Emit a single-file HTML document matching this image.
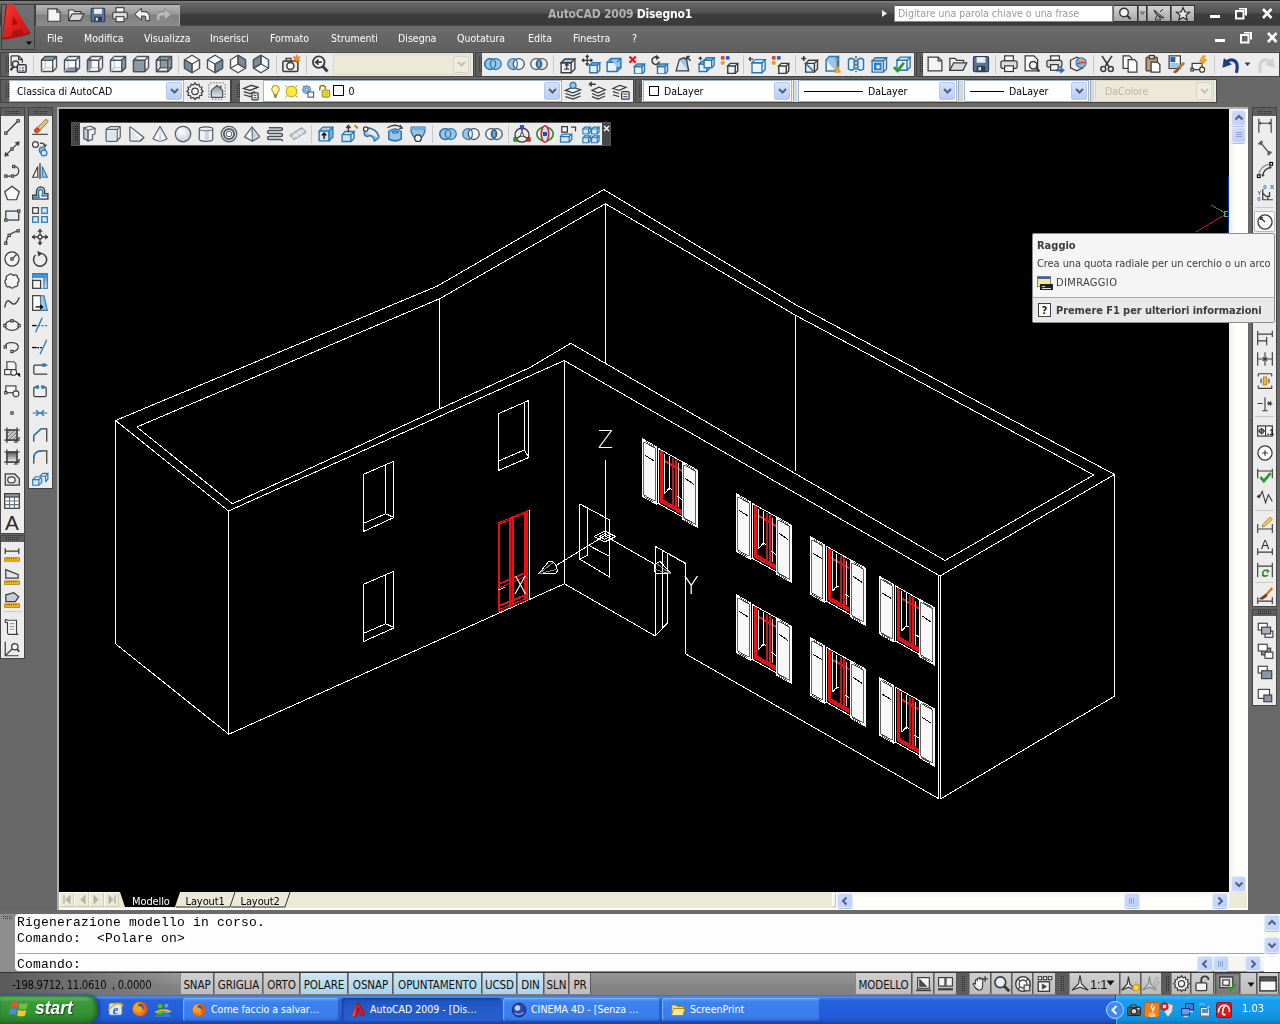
<!DOCTYPE html>
<html><head><meta charset="utf-8"><title>AutoCAD 2009 Disegno1</title>
<style>

html,body{margin:0;padding:0;}
body{width:1280px;height:1024px;overflow:hidden;background:#686868;position:relative;font-family:"DejaVu Sans Condensed","Liberation Sans",sans-serif;font-size:10.5px;color:#000;}
.a{position:absolute;box-sizing:border-box;}
.t{position:absolute;white-space:nowrap;line-height:1;}
.t,.st,.task,.combo{will-change:opacity;}
.tb{position:absolute;box-sizing:border-box;background:#ececec;border:1px solid #444;}
.grip{position:absolute;background:#4a4a4a;}
.sep{position:absolute;background:#c9c9c9;}
.combo{position:absolute;box-sizing:border-box;background:#fff;border:1px solid #9ab8d4;}
.dd{position:absolute;box-sizing:border-box;background:linear-gradient(#d6e2fb,#b9cdf6);border:1px solid #b4c8f0;border-radius:2px;}
.sbtn{position:absolute;box-sizing:border-box;background:linear-gradient(135deg,#cfdbfb,#bccef7);border:1px solid #e4ebfc;border-radius:3px;box-shadow:0 1px 0 #b0c0e4;}
.st{position:absolute;box-sizing:border-box;top:973px;height:21px;border-left:1px solid #8a8a8a;border-right:1px solid #5a5a5a;font-size:11.5px;line-height:24px;text-align:center;color:#111;background:linear-gradient(#d0d0d0,#bcbcbc);white-space:nowrap;overflow:hidden;letter-spacing:-0.1px}
.sx{display:inline-block;transform:scaleY(1.12);transform-origin:50% 55%}
.st.on{background:linear-gradient(#cfe6f3,#a9d2ea);}
.task{position:absolute;box-sizing:border-box;top:998px;height:23px;border-radius:3px;background:linear-gradient(#5c9bf4,#3c81f0 20%,#3a7eec 80%,#3572dc);box-shadow:inset 1px 1px 1px #7db2f8, inset -1px -1px 1px #2a5fc5;color:#fff;font-size:10.5px;line-height:23px;white-space:nowrap;overflow:hidden;}
.task.act{background:linear-gradient(#1c4fb4,#2259c6 30%,#2660d0);box-shadow:inset 1px 1px 2px #123a94;}

</style></head>
<body>
<div class="a" style="left:0px;top:0px;width:1280px;height:26px;background:linear-gradient(#222 0,#222 1px,#828282 1px,#646464 4px,#505050 13px,#3d3d3d 14px,#3a3a3a 24px,#484848 26px);"></div>
<div class="a" style="left:35px;top:4px;width:145px;height:22px;background:linear-gradient(#b6b6b6,#9a9a9a 40%,#808080 50%,#8c8c8c);border-top:1px solid #3c3c3c;border-left:1px solid #3c3c3c;border-right:1px solid #aaa;"></div>
<svg class="a" style="left:45.0px;top:6.0px" width="18" height="18" viewBox="0 0 16 16"><path d="M2.5,2.5 H10.5 L13.5,5.5 V13.5 H2.5 Z" stroke="#3c3c3c" stroke-width="1" fill="#f4f4f6" /><path d="M10.5,2.5 V5.5 H13.5" stroke="#3c3c3c" stroke-width="1" fill="none" /></svg>
<svg class="a" style="left:67.0px;top:6.0px" width="18" height="18" viewBox="0 0 16 16"><path d="M1.5,13 V3.5 H5.5 L7,5 H12.5 V7" stroke="#3c3c3c" stroke-width="1" fill="#f0f0f0" /><path d="M1.5,13 L4.5,7 H15 L12,13 Z" stroke="#3c3c3c" stroke-width="1" fill="#d6dade" /></svg>
<svg class="a" style="left:89.0px;top:6.0px" width="18" height="18" viewBox="0 0 16 16"><rect x="2" y="2" width="12" height="12" rx="1" stroke="#2c3e58" stroke-width="1" fill="#5c7494"/><rect x="4.5" y="2.5" width="7" height="4.5" rx="0" stroke="none" stroke-width="0" fill="#e8ecf0"/><rect x="4.5" y="9.5" width="7" height="4" rx="0" stroke="none" stroke-width="0" fill="#2c3e58"/><rect x="6" y="10.5" width="2" height="2.5" rx="0" stroke="none" stroke-width="0" fill="#dfe3e8"/></svg>
<svg class="a" style="left:111.0px;top:6.0px" width="18" height="18" viewBox="0 0 16 16"><rect x="4.5" y="1.5" width="7" height="4" rx="0" stroke="#3c3c3c" stroke-width="1" fill="#fff"/><rect x="1.5" y="5.5" width="13" height="6" rx="1.5" stroke="#3c3c3c" stroke-width="1" fill="#d8dce0"/><rect x="4.5" y="9.5" width="7" height="4.5" rx="0" stroke="#3c3c3c" stroke-width="1" fill="#fff"/></svg>
<svg class="a" style="left:133.0px;top:6.0px" width="18" height="18" viewBox="0 0 16 16"><path d="M1.5,7.5 L7.5,2 V5 H10 Q14.5,5 14.5,9.5 V13 H11.5 V10 Q11.5,9 10,9 H7.5 V12.5 Z" stroke="#4a4a4a" stroke-width="0.9" fill="#f6f6f6" stroke-linejoin="round"/></svg>
<svg class="a" style="left:155.0px;top:6.0px" width="18" height="18" viewBox="0 0 16 16"><path d="M14.5,7.5 L8.5,2 V5 H6 Q1.5,5 1.5,9.5 V13 H4.5 V10 Q4.5,9 6,9 H8.5 V12.5 Z" stroke="#8a8a8a" stroke-width="0.9" fill="#b8b8b8" stroke-linejoin="round"/></svg>
<div class="t" style="left:548px;top:7.5px;font-size:12px;font-weight:bold;letter-spacing:-0.2px;"><span style="color:#b2b2b2">AutoCAD 2009</span> <span style="color:#fff">Disegno1</span></div>
<svg class="a" style="left:881px;top:9px" width="8" height="9"><path d="M1,1 L6,4.5 L1,8 Z" fill="#eee"/></svg>
<div class="a" style="left:894px;top:5px;width:219px;height:17px;background:#fff;border:1px solid #8a8a8a;border-top-color:#555;"></div>
<div class="t" style="left:898px;top:8px;color:#9a9a9a;font-size:10.5px;">Digitare una parola chiave o una frase</div>
<div class="a" style="left:1113px;top:5px;width:25px;height:17px;background:linear-gradient(#d4d4d4,#a6a6a6);border:1px solid #333;border-left-color:#666;"></div>
<div class="a" style="left:1138px;top:5px;width:9px;height:17px;background:linear-gradient(#d4d4d4,#a6a6a6);border:1px solid #333;border-left-color:#666;"></div>
<div class="a" style="left:1147px;top:5px;width:24px;height:17px;background:linear-gradient(#d4d4d4,#a6a6a6);border:1px solid #333;border-left-color:#666;"></div>
<div class="a" style="left:1171px;top:5px;width:24px;height:17px;background:linear-gradient(#d4d4d4,#a6a6a6);border:1px solid #333;border-left-color:#666;"></div>
<svg class="a" style="left:1117.0px;top:5.5px" width="16" height="16" viewBox="0 0 16 16"><circle cx="7" cy="6.5" r="4.3" stroke="#333" stroke-width="1.4" fill="#f4f4f4"/><path d="M10,9.5 L13.5,13" stroke="#333" stroke-width="2" fill="none" /></svg>
<svg class="a" style="left:1150.5px;top:5.5px" width="16" height="16" viewBox="0 0 16 16"><path d="M3,4 Q6,11 13,12" stroke="#333" stroke-width="1.2" fill="none" /><path d="M3,4 L13,12 M6,9.5 L4,14 H10 L8,10.8 M9,6 L12,3" stroke="#333" stroke-width="1" fill="none" /></svg>
<svg class="a" style="left:1174.5px;top:5.5px" width="16" height="16" viewBox="0 0 16 16"><path d="M8,1.5 L9.9,6 L14.6,6.3 L11,9.3 L12.2,14 L8,11.4 L3.8,14 L5,9.3 L1.4,6.3 L6.1,6 Z" stroke="#222" stroke-width="1.1" fill="#e8e8e8" /></svg>
<svg class="a" style="left:1139px;top:11px" width="7" height="5"><path d="M0.5,0.5 L6.5,0.5 L3.5,4.5 Z" fill="#777"/></svg>
<svg class="a" style="left:1210px;top:8px" width="66" height="14" viewBox="0 0 66 14">
<rect x="0" y="7" width="10" height="3" fill="#fff"/>
<path d="M29,0.5 h7 v7 M26,3 h7.5 v7.5 h-7.5 Z" fill="none" stroke="#fff" stroke-width="2"/>
<path d="M53,1 L61.5,10 M61.5,1 L53,10" stroke="#fff" stroke-width="2.6" fill="none"/>
</svg>
<div class="a" style="left:0px;top:26px;width:1280px;height:25px;background:linear-gradient(#6c6c6c,#5f5f5f);"></div>
<div class="t" style="left:47px;top:33px;color:#fff;font-size:10.5px;">File</div>
<div class="t" style="left:84px;top:33px;color:#fff;font-size:10.5px;">Modifica</div>
<div class="t" style="left:144px;top:33px;color:#fff;font-size:10.5px;">Visualizza</div>
<div class="t" style="left:210px;top:33px;color:#fff;font-size:10.5px;">Inserisci</div>
<div class="t" style="left:270px;top:33px;color:#fff;font-size:10.5px;">Formato</div>
<div class="t" style="left:331px;top:33px;color:#fff;font-size:10.5px;">Strumenti</div>
<div class="t" style="left:398px;top:33px;color:#fff;font-size:10.5px;">Disegna</div>
<div class="t" style="left:457px;top:33px;color:#fff;font-size:10.5px;">Quotatura</div>
<div class="t" style="left:528px;top:33px;color:#fff;font-size:10.5px;">Edita</div>
<div class="t" style="left:573px;top:33px;color:#fff;font-size:10.5px;">Finestra</div>
<div class="t" style="left:632px;top:33px;color:#fff;font-size:10.5px;">?</div>
<svg class="a" style="left:1215px;top:32px" width="66" height="14" viewBox="0 0 66 14">
<rect x="0" y="7" width="10" height="3" fill="#fff"/>
<path d="M29,0.5 h7 v7 M26,3 h7.5 v7.5 h-7.5 Z" fill="none" stroke="#fff" stroke-width="2"/>
<path d="M53,1 L61.5,10 M61.5,1 L53,10" stroke="#fff" stroke-width="2.6" fill="none"/>
</svg>
<div class="a" style="left:1px;top:4px;width:34px;height:46px;background:linear-gradient(#707070,#666);border:1px solid #3e3e3e;border-right-color:#444;"></div>
<svg class="a" style="left:0;top:0" width="36" height="52" viewBox="0 0 36 52">
<defs><linearGradient id="ag" x1="0" y1="0" x2="1" y2="1"><stop offset="0" stop-color="#f23c3c"/><stop offset="0.55" stop-color="#e01c1c"/><stop offset="1" stop-color="#c01212"/></linearGradient></defs>
<path d="M12.5,30.5 L21.5,28.5 L25.5,35.5 L11.5,38.5 Z" fill="#b41212"/>
<path d="M7,4.3 L13.2,4.3 L30.5,33 L25.5,35.5 L21.5,28.5 L12.5,30.5 L11.5,38.2 L2.5,39.5 Z" fill="url(#ag)"/>
<path d="M13.3,15.5 L17.8,24.2 L12,25.3 Z" fill="#a81010"/>
<path d="M7,4.3 L5.6,6 L2.2,37.5 L2.5,39.5 Z" fill="#9c0c0c"/>
<path d="M2.5,39.5 L11.5,38.2 L11.8,36.5 L3,37.8 Z" fill="#a40e0e"/>
<path d="M25.5,35.5 L30.5,33 L29.8,31.8 L24.8,34.2 Z" fill="#a40e0e"/>
<path d="M26,41.5 L32,41.5 L29,45 Z" fill="#000"/>
</svg>
<div class="tb" style="left:0px;top:52px;width:474px;height:25px;"></div>
<div class="a" style="left:1px;top:53px;width:8px;height:23px;background:#5e5e5e;"></div><div class="a" style="left:5px;top:57px;width:4px;height:15px;background:conic-gradient(#2a2a2a 25%,transparent 0) 0 0/2px 2px;"></div>
<svg class="a" style="left:8.0px;top:54.0px" width="20" height="20" viewBox="0 0 16 16"><path d="M2.5,1.5 H8.5 L11.5,4.5 V7" stroke="#3c3c3c" stroke-width="1" fill="none" /><path d="M2.5,1.5 V10" stroke="#3c3c3c" stroke-width="1" fill="none" /><path d="M8.5,1.5 V4.5 H11.5" stroke="#3c3c3c" stroke-width="1" fill="none" /><circle cx="6" cy="8" r="2.5" stroke="#3c3c3c" stroke-width="1.2" fill="none"/><path d="M4.5,10 L2,13" stroke="#3c3c3c" stroke-width="1.8" fill="none" /><rect x="7.5" y="8.5" width="7" height="6" rx="1" stroke="#3c3c3c" stroke-width="1.2" fill="#eef2f6"/><path d="M9,11 H10 M11,11 H13 M9,13 H10 M11,13 H13" stroke="#4a6a9a" stroke-width="1" fill="none" /></svg>
<svg class="a" style="left:39.0px;top:54.0px" width="20" height="20" viewBox="0 0 16 16"><path d="M2,5 L5,2 H14 V11 L11,14 H2 Z" stroke="#4a525c" stroke-width="1.15" fill="#fdfdfd" stroke-linejoin="round"/><path d="M5,2 V11 H14 M5,11 L2,14" stroke="#b8c0ca" stroke-width="0.9" fill="none" /><path d="M2,5 H11 V14 M11,5 L14,2" stroke="#4a525c" stroke-width="1.15" fill="none" stroke-linejoin="round"/><path d="M2,5 L5,2 H14 L11,5 Z" stroke="#4a525c" stroke-width="1" fill="#8e99a6" stroke-linejoin="round"/></svg>
<svg class="a" style="left:62.0px;top:54.0px" width="20" height="20" viewBox="0 0 16 16"><path d="M2,5 L5,2 H14 V11 L11,14 H2 Z" stroke="#4a525c" stroke-width="1.15" fill="#fdfdfd" stroke-linejoin="round"/><path d="M2,14 L5,11 H14 L11,14 Z" stroke="#4a525c" stroke-width="1" fill="#8e99a6" stroke-linejoin="round"/><path d="M5,2 V11 H14 M5,11 L2,14" stroke="#b8c0ca" stroke-width="0.9" fill="none" /><path d="M2,5 H11 V14 M11,5 L14,2" stroke="#4a525c" stroke-width="1.15" fill="none" stroke-linejoin="round"/></svg>
<svg class="a" style="left:85.0px;top:54.0px" width="20" height="20" viewBox="0 0 16 16"><path d="M2,5 L5,2 H14 V11 L11,14 H2 Z" stroke="#4a525c" stroke-width="1.15" fill="#fdfdfd" stroke-linejoin="round"/><path d="M2,5 L5,2 V11 L2,14 Z" stroke="#4a525c" stroke-width="1" fill="#8e99a6" stroke-linejoin="round"/><path d="M5,2 V11 H14 M5,11 L2,14" stroke="#b8c0ca" stroke-width="0.9" fill="none" /><path d="M2,5 H11 V14 M11,5 L14,2" stroke="#4a525c" stroke-width="1.15" fill="none" stroke-linejoin="round"/></svg>
<svg class="a" style="left:108.0px;top:54.0px" width="20" height="20" viewBox="0 0 16 16"><path d="M2,5 L5,2 H14 V11 L11,14 H2 Z" stroke="#4a525c" stroke-width="1.15" fill="#fdfdfd" stroke-linejoin="round"/><path d="M5,2 V11 H14 M5,11 L2,14" stroke="#b8c0ca" stroke-width="0.9" fill="none" /><path d="M2,5 H11 V14 M11,5 L14,2" stroke="#4a525c" stroke-width="1.15" fill="none" stroke-linejoin="round"/><path d="M11,5 L14,2 V11 L11,14 Z" stroke="#4a525c" stroke-width="1" fill="#8e99a6" stroke-linejoin="round"/></svg>
<svg class="a" style="left:131.0px;top:54.0px" width="20" height="20" viewBox="0 0 16 16"><path d="M2,5 L5,2 H14 V11 L11,14 H2 Z" stroke="#4a525c" stroke-width="1.15" fill="#fdfdfd" stroke-linejoin="round"/><path d="M5,2 V11 H14 M5,11 L2,14" stroke="#b8c0ca" stroke-width="0.9" fill="none" /><path d="M2,5 H11 V14 M11,5 L14,2" stroke="#4a525c" stroke-width="1.15" fill="none" stroke-linejoin="round"/><path d="M2,5 H11 V14 H2 Z" stroke="#4a525c" stroke-width="1" fill="#8e99a6" stroke-linejoin="round"/></svg>
<svg class="a" style="left:154.0px;top:54.0px" width="20" height="20" viewBox="0 0 16 16"><path d="M2,5 L5,2 H14 V11 L11,14 H2 Z" stroke="#4a525c" stroke-width="1.15" fill="#fdfdfd" stroke-linejoin="round"/><path d="M5,2 H14 V11 H5 Z" stroke="#4a525c" stroke-width="1" fill="#8e99a6" stroke-linejoin="round"/><path d="M2,5 H11 V14 H2 Z M11,5 L14,2 M2,14 L5,11 M2,5 L5,2 M11,14 L14,11" stroke="#4a525c" stroke-width="1.1" fill="none" stroke-linejoin="round"/></svg>
<svg class="a" style="left:182.0px;top:54.0px" width="20" height="20" viewBox="0 0 16 16"><path d="M8,1 L14,4.6 V11.4 L8,15 L2,11.4 V4.6 Z" stroke="#4a525c" stroke-width="1.15" fill="#fdfdfd" stroke-linejoin="round"/><path d="M2,4.6 L8,8 V15 L2,11.4 Z" stroke="#4a525c" stroke-width="1" fill="#7e8996" stroke-linejoin="round"/><path d="M8,8 L2,4.6 M8,8 L14,4.6 M8,8 V15" stroke="#4a525c" stroke-width="1" fill="none" stroke-linejoin="round"/></svg>
<svg class="a" style="left:205.0px;top:54.0px" width="20" height="20" viewBox="0 0 16 16"><path d="M8,1 L14,4.6 V11.4 L8,15 L2,11.4 V4.6 Z" stroke="#4a525c" stroke-width="1.15" fill="#fdfdfd" stroke-linejoin="round"/><path d="M14,4.6 L8,8 V15 L14,11.4 Z" stroke="#4a525c" stroke-width="1" fill="#7e8996" stroke-linejoin="round"/><path d="M8,8 L2,4.6 M8,8 L14,4.6 M8,8 V15" stroke="#4a525c" stroke-width="1" fill="none" stroke-linejoin="round"/></svg>
<svg class="a" style="left:228.0px;top:54.0px" width="20" height="20" viewBox="0 0 16 16"><path d="M8,1 L14,4.6 V11.4 L8,15 L2,11.4 V4.6 Z" stroke="#4a525c" stroke-width="1.15" fill="#fdfdfd" stroke-linejoin="round"/><path d="M14,4.6 L8,1 V8 L14,11.4 Z" stroke="#4a525c" stroke-width="1" fill="#7e8996" stroke-linejoin="round"/><path d="M8,8 L2,11.4 M8,8 L14,11.4 M8,8 V1" stroke="#4a525c" stroke-width="1" fill="none" stroke-linejoin="round"/></svg>
<svg class="a" style="left:251.0px;top:54.0px" width="20" height="20" viewBox="0 0 16 16"><path d="M8,1 L14,4.6 V11.4 L8,15 L2,11.4 V4.6 Z" stroke="#4a525c" stroke-width="1.15" fill="#fdfdfd" stroke-linejoin="round"/><path d="M2,4.6 L8,1 V8 L2,11.4 Z" stroke="#4a525c" stroke-width="1" fill="#7e8996" stroke-linejoin="round"/><path d="M8,8 L2,11.4 M8,8 L14,11.4 M8,8 V1" stroke="#4a525c" stroke-width="1" fill="none" stroke-linejoin="round"/></svg>
<svg class="a" style="left:281.0px;top:54.0px" width="20" height="20" viewBox="0 0 16 16"><rect x="1.5" y="5.5" width="12" height="8.5" rx="1" stroke="#3c3c3c" stroke-width="1.2" fill="#e8eaee"/><rect x="4" y="3.5" width="4" height="2" rx="0" stroke="#3c3c3c" stroke-width="1" fill="#ddd"/><circle cx="7.5" cy="9.5" r="2.8" stroke="#3c3c3c" stroke-width="1.2" fill="#fff"/><path d="M12.5,0.5 L13.2,2.6 L15.4,2.2 L13.9,3.8 L15.4,5.4 L13.2,5 L12.5,7 L11.8,5 L9.6,5.4 L11.1,3.8 L9.6,2.2 L11.8,2.6 Z" stroke="#e06010" stroke-width="0.5" fill="#f89020" /></svg>
<svg class="a" style="left:310.0px;top:54.0px" width="20" height="20" viewBox="0 0 16 16"><circle cx="7" cy="6.5" r="4.6" stroke="#3c3c3c" stroke-width="1.5" fill="#f4f8fc"/><path d="M10.3,10 L14,14" stroke="#3c3c3c" stroke-width="2.4" fill="none" /><path d="M9.5,6.5 H5 M6.8,4.5 L4.6,6.5 L6.8,8.5" stroke="#3c3c3c" stroke-width="1.4" fill="none" /></svg>
<div class="sep" style="left:33px;top:55px;width:1px;height:19px;"></div>
<div class="sep" style="left:178px;top:55px;width:1px;height:19px;"></div>
<div class="sep" style="left:276px;top:55px;width:1px;height:19px;"></div>
<div class="sep" style="left:306px;top:55px;width:1px;height:19px;"></div>
<div class="combo" style="left:333px;top:54px;width:138px;height:21px;background:#ece9d8;border-color:#d9d6c8"><div class="a" style="right:1px;top:1px;width:16px;height:17px;border:1px solid #d8d5c6;border-radius:2px;background:#efecdf"></div><svg class="a" style="right:4px;top:6.0px" width="9" height="7"><path d="M1,1 L4.5,4.5 L8,1" fill="none" stroke="#c4c1b2" stroke-width="2"/></svg></div>
<div class="tb" style="left:475px;top:52px;width:440px;height:25px;"></div>
<div class="a" style="left:476px;top:53px;width:6px;height:23px;background:#5e5e5e;"></div><div class="a" style="left:478px;top:57px;width:4px;height:15px;background:conic-gradient(#2a2a2a 25%,transparent 0) 0 0/2px 2px;"></div>
<svg class="a" style="left:483.0px;top:54.0px" width="20" height="20" viewBox="0 0 16 16"><circle cx="5.8" cy="8" r="4.4" stroke="#2a78b4" stroke-width="1" fill="#9cc4e4"/><circle cx="10.2" cy="8" r="4.4" stroke="#2a78b4" stroke-width="1" fill="#9cc4e4"/><circle cx="5.8" cy="8" r="4.4" stroke="#2a78b4" stroke-width="1" fill="none"/></svg>
<svg class="a" style="left:506.0px;top:54.0px" width="20" height="20" viewBox="0 0 16 16"><circle cx="5.8" cy="8" r="4.4" stroke="#2a78b4" stroke-width="1" fill="#9cc4e4"/><circle cx="10.2" cy="8" r="4.4" stroke="#4a525c" stroke-width="1" fill="#f4f6f8"/><path d="M8,4.2 Q10.2,8 8,11.8" stroke="#2a78b4" stroke-width="1" fill="none" /></svg>
<svg class="a" style="left:529.0px;top:54.0px" width="20" height="20" viewBox="0 0 16 16"><circle cx="5.8" cy="8" r="4.4" stroke="#4a525c" stroke-width="1" fill="#f6f7f9"/><circle cx="10.2" cy="8" r="4.4" stroke="#4a525c" stroke-width="1" fill="none"/><path d="M8,4.2 Q10.3,8 8,11.8 Q5.7,8 8,4.2 Z" stroke="#2a78b4" stroke-width="1" fill="#9cc4e4" /></svg>
<svg class="a" style="left:558.0px;top:54.0px" width="20" height="20" viewBox="0 0 16 16"><path d="M2.5,7 H10.5 V15 H2.5 Z" stroke="#3c3c3c" stroke-width="1.1" fill="#eaf2fa" /><path d="M2.5,7 L5.5,4 H13.5 L10.5,7 Z" stroke="#3c3c3c" stroke-width="1.1" fill="#9cc4e4" /><path d="M13.5,4 V12 L10.5,15" stroke="#3c3c3c" stroke-width="1.1" fill="none" /><path d="M7,11.5 V7.8 M5.5,9.3 L7,7.6 L8.5,9.3 M5,12 H9" stroke="#3c3c3c" stroke-width="1" fill="none" /></svg>
<svg class="a" style="left:581.0px;top:54.0px" width="20" height="20" viewBox="0 0 16 16"><path d="M7,9 H13 V15 H7 Z" stroke="#2a78b4" stroke-width="1.1" fill="#eaf2fa" /><path d="M7,9 L9,7 H15 L13,9 Z" stroke="#2a78b4" stroke-width="1.1" fill="#9cc4e4" /><path d="M15,7 V13 L13,15" stroke="#2a78b4" stroke-width="1.1" fill="none" /><path d="M5,1 V9 M1,5 H9 M3.8,2.5 L5,1 L6.2,2.5 M3.8,7.5 L5,9 L6.2,7.5 M2.5,3.8 L1,5 L2.5,6.2 M7.5,3.8 L9,5 L7.5,6.2" stroke="#3c3c3c" stroke-width="1" fill="none" /></svg>
<svg class="a" style="left:604.0px;top:54.0px" width="20" height="20" viewBox="0 0 16 16"><path d="M2.5,6.5 H10.5 V14 H2.5 Z" stroke="#2a78b4" stroke-width="1.2" fill="#eaf2fa" /><path d="M5.5,3.5 H13.5 V11 H10.5 M5.5,3.5 V6.5" stroke="#2a78b4" stroke-width="1.2" fill="#9cc4e4" /><path d="M2.5,6.5 L5.5,3.5 M10.5,6.5 L13.5,3.5 M10.5,14 L13.5,11" stroke="#2a78b4" stroke-width="1" fill="none" /></svg>
<svg class="a" style="left:627.0px;top:54.0px" width="20" height="20" viewBox="0 0 16 16"><path d="M6,10 H12 V16 H6 Z" stroke="#2a78b4" stroke-width="1.1" fill="#eaf2fa" /><path d="M6,10 L8,8 H14 L12,10 Z" stroke="#2a78b4" stroke-width="1.1" fill="#9cc4e4" /><path d="M14,8 V14 L12,16" stroke="#2a78b4" stroke-width="1.1" fill="none" /><path d="M2,2 L7,7 M7,2 L2,7" stroke="#d82020" stroke-width="1.8" fill="none" /></svg>
<svg class="a" style="left:650.0px;top:54.0px" width="20" height="20" viewBox="0 0 16 16"><path d="M6,10 H12 V16 H6 Z" stroke="#2a78b4" stroke-width="1.1" fill="#eaf2fa" /><path d="M6,10 L8,8 H14 L12,10 Z" stroke="#2a78b4" stroke-width="1.1" fill="#9cc4e4" /><path d="M14,8 V14 L12,16" stroke="#2a78b4" stroke-width="1.1" fill="none" /><path d="M6.5,3 A3,3 0 1 0 7.5,6" stroke="#3c3c3c" stroke-width="1.2" fill="none" /><path d="M5,1 L7.5,3 L5,4.5 Z" stroke="#3c3c3c" stroke-width="0.5" fill="#3c3c3c" /></svg>
<svg class="a" style="left:673.0px;top:54.0px" width="20" height="20" viewBox="0 0 16 16"><path d="M2.5,13.5 L5,4.5 L9,3 L12.5,13.5 Z" stroke="#3c3c3c" stroke-width="1" fill="#dfe6ee" /><path d="M5,4.5 L9,3 L11,5 L12.5,13.5" stroke="#3c3c3c" stroke-width="1" fill="#9cc4e4" /><path d="M11,2 L14,5.5 M11,2 V4.5 M11,2 H13.5" stroke="#3c3c3c" stroke-width="1.2" fill="none" /></svg>
<svg class="a" style="left:696.0px;top:54.0px" width="20" height="20" viewBox="0 0 16 16"><path d="M2.5,8 H8.5 V14 H2.5 Z" stroke="#2a78b4" stroke-width="1.1" fill="#eaf2fa" /><path d="M2.5,8 L4.5,6 H10.5 L8.5,8 Z" stroke="#2a78b4" stroke-width="1.1" fill="#9cc4e4" /><path d="M10.5,6 V12 L8.5,14" stroke="#2a78b4" stroke-width="1.1" fill="none" /><path d="M6.5,5 H12.5 V11 H6.5 Z" stroke="#2a78b4" stroke-width="1.1" fill="#eaf2fa" /><path d="M6.5,5 L8.5,3 H14.5 L12.5,5 Z" stroke="#2a78b4" stroke-width="1.1" fill="#9cc4e4" /><path d="M14.5,3 V9 L12.5,11" stroke="#2a78b4" stroke-width="1.1" fill="none" /><path d="M2,3.5 H5 M3.5,2 V5" stroke="#3c3c3c" stroke-width="1" fill="none" /></svg>
<svg class="a" style="left:719.0px;top:54.0px" width="20" height="20" viewBox="0 0 16 16"><path d="M7,9.5 H13 V15.5 H7 Z" stroke="#3c3c3c" stroke-width="1.1" fill="#eaf2fa" /><path d="M7,9.5 L9,7.5 H15 L13,9.5 Z" stroke="#3c3c3c" stroke-width="1.1" fill="#e8eef4" /><path d="M15,7.5 V13.5 L13,15.5" stroke="#3c3c3c" stroke-width="1.1" fill="none" /><rect x="1.5" y="1.5" width="3" height="3" rx="0.8" stroke="none" stroke-width="0" fill="#e04030"/><rect x="5.5" y="1.5" width="3" height="3" rx="0.8" stroke="none" stroke-width="0" fill="#3060d0"/><rect x="1.5" y="5.5" width="3" height="3" rx="0.8" stroke="none" stroke-width="0" fill="#e8a020"/></svg>
<svg class="a" style="left:747.0px;top:54.0px" width="20" height="20" viewBox="0 0 16 16"><path d="M4,7 H12 V15 H4 Z" stroke="#2a78b4" stroke-width="1.1" fill="#eaf2fa" /><path d="M4,7 L6.5,4.5 H14.5 L12,7 Z" stroke="#2a78b4" stroke-width="1.1" fill="#f4f8fc" /><path d="M14.5,4.5 V12.5 L12,15" stroke="#2a78b4" stroke-width="1.1" fill="none" /><path d="M1.5,4 H5 M1.5,4 L3,2.5 M1.5,4 L3,5.5" stroke="#3c3c3c" stroke-width="1" fill="none" /></svg>
<svg class="a" style="left:770.0px;top:54.0px" width="20" height="20" viewBox="0 0 16 16"><path d="M7,9.5 H13 V15.5 H7 Z" stroke="#3c3c3c" stroke-width="1.1" fill="#eaf2fa" /><path d="M7,9.5 L9,7.5 H15 L13,9.5 Z" stroke="#3c3c3c" stroke-width="1.1" fill="#f8f8f8" /><path d="M15,7.5 V13.5 L13,15.5" stroke="#3c3c3c" stroke-width="1.1" fill="none" /><rect x="1.5" y="1.5" width="3" height="3" rx="0.8" stroke="none" stroke-width="0" fill="#e04030"/><rect x="5.5" y="1.5" width="3" height="3" rx="0.8" stroke="none" stroke-width="0" fill="#3060d0"/><rect x="1.5" y="5.5" width="3" height="3" rx="0.8" stroke="none" stroke-width="0" fill="#e8a020"/></svg>
<svg class="a" style="left:800.0px;top:54.0px" width="20" height="20" viewBox="0 0 16 16"><path d="M4.5,7.5 H11.5 V14.5 H4.5 Z" stroke="#3c3c3c" stroke-width="1.1" fill="#eaf2fa" /><path d="M4.5,7.5 L7.0,5.0 H14.0 L11.5,7.5 Z" stroke="#3c3c3c" stroke-width="1.1" fill="#f0f0f0" /><path d="M14.0,5.0 V12.0 L11.5,14.5" stroke="#3c3c3c" stroke-width="1.1" fill="none" /><path d="M4.5,7.5 L11.5,14.5" stroke="#2a78b4" stroke-width="1.2" fill="none" /><path d="M1,3.5 H5 M3,1.5 V5.5" stroke="#3c3c3c" stroke-width="1.2" fill="none" /></svg>
<svg class="a" style="left:823.0px;top:54.0px" width="20" height="20" viewBox="0 0 16 16"><path d="M2.5,4.5 H10 V13.5 H2.5 Z" stroke="#2a78b4" stroke-width="1.2" fill="#eaf2fa" /><path d="M2.5,4.5 L5,2 H12.5 V10 L10,13.5 M10,4.5 L12.5,2" stroke="#2a78b4" stroke-width="1.1" fill="#9cc4e4" /><path d="M11.5,5 V9.5" stroke="#a06020" stroke-width="1.4" fill="none" /><path d="M9,14.5 L11.5,9.5 L14,14.5 Z" stroke="#c88010" stroke-width="0.6" fill="#f4b020" /></svg>
<svg class="a" style="left:846.0px;top:54.0px" width="20" height="20" viewBox="0 0 16 16"><path d="M2,4.5 Q4.5,2.5 6.5,4.5 V12 Q4.5,14 2,12 Z" stroke="#2a78b4" stroke-width="1.2" fill="#eaf2fa" /><path d="M9.5,4.5 Q11.5,2.5 14,4.5 V12 Q11.5,14 9.5,12 Z" stroke="#2a78b4" stroke-width="1.2" fill="#eaf2fa" /><path d="M8,1.5 V14.5" stroke="#3c3c3c" stroke-width="1" fill="none" stroke-dasharray="2 1"/></svg>
<svg class="a" style="left:869.0px;top:54.0px" width="20" height="20" viewBox="0 0 16 16"><path d="M2.5,5.5 H11.5 V14.5 H2.5 Z" stroke="#2a78b4" stroke-width="1.1" fill="#eaf2fa" /><path d="M2.5,5.5 L5.0,3.0 H14.0 L11.5,5.5 Z" stroke="#2a78b4" stroke-width="1.1" fill="#9cc4e4" /><path d="M14.0,3.0 V12.0 L11.5,14.5" stroke="#2a78b4" stroke-width="1.1" fill="none" /><rect x="4.5" y="7.5" width="5" height="5" rx="0" stroke="#2a78b4" stroke-width="1.1" fill="#3a8ad0"/><rect x="6" y="9" width="2.5" height="2.5" rx="0" stroke="none" stroke-width="0" fill="#eaf2fa"/></svg>
<svg class="a" style="left:892.0px;top:54.0px" width="20" height="20" viewBox="0 0 16 16"><path d="M4,5 H12 V13 H4 Z" stroke="#2a78b4" stroke-width="1.1" fill="#eaf2fa" /><path d="M4,5 L6.5,2.5 H14.5 L12,5 Z" stroke="#2a78b4" stroke-width="1.1" fill="#d8e8f6" /><path d="M14.5,2.5 V10.5 L12,13" stroke="#2a78b4" stroke-width="1.1" fill="none" /><path d="M1.5,10.5 L4.5,13.5 L9.5,7" stroke="#2a9a2a" stroke-width="2.2" fill="none" /></svg>
<div class="sep" style="left:553px;top:55px;width:1px;height:19px;"></div>
<div class="sep" style="left:743px;top:55px;width:1px;height:19px;"></div>
<div class="sep" style="left:795px;top:55px;width:1px;height:19px;"></div>
<div class="tb" style="left:916px;top:52px;width:364px;height:25px;"></div>
<div class="a" style="left:917px;top:53px;width:6px;height:23px;background:#5e5e5e;"></div><div class="a" style="left:919px;top:57px;width:4px;height:15px;background:conic-gradient(#2a2a2a 25%,transparent 0) 0 0/2px 2px;"></div>
<svg class="a" style="left:925.0px;top:54.0px" width="20" height="20" viewBox="0 0 16 16"><path d="M2.5,2.5 H10.5 L13.5,5.5 V13.5 H2.5 Z" stroke="#3c3c3c" stroke-width="1" fill="#f4f4f6" /><path d="M10.5,2.5 V5.5 H13.5" stroke="#3c3c3c" stroke-width="1" fill="none" /></svg>
<svg class="a" style="left:948.0px;top:54.0px" width="20" height="20" viewBox="0 0 16 16"><path d="M1.5,13 V3.5 H5.5 L7,5 H12.5 V7" stroke="#3c3c3c" stroke-width="1" fill="#f0f0f0" /><path d="M1.5,13 L4.5,7 H15 L12,13 Z" stroke="#3c3c3c" stroke-width="1" fill="#d6dade" /></svg>
<svg class="a" style="left:971.0px;top:54.0px" width="20" height="20" viewBox="0 0 16 16"><rect x="2" y="2" width="12" height="12" rx="1" stroke="#2c3e58" stroke-width="1" fill="#5c7494"/><rect x="4.5" y="2.5" width="7" height="4.5" rx="0" stroke="none" stroke-width="0" fill="#e8ecf0"/><rect x="4.5" y="9.5" width="7" height="4" rx="0" stroke="none" stroke-width="0" fill="#2c3e58"/><rect x="6" y="10.5" width="2" height="2.5" rx="0" stroke="none" stroke-width="0" fill="#dfe3e8"/></svg>
<svg class="a" style="left:999.0px;top:54.0px" width="20" height="20" viewBox="0 0 16 16"><rect x="4.5" y="1.5" width="7" height="4" rx="0" stroke="#3c3c3c" stroke-width="1" fill="#fff"/><rect x="1.5" y="5.5" width="13" height="6" rx="1.5" stroke="#3c3c3c" stroke-width="1" fill="#d8dce0"/><rect x="4.5" y="9.5" width="7" height="4.5" rx="0" stroke="#3c3c3c" stroke-width="1" fill="#fff"/></svg>
<svg class="a" style="left:1022.0px;top:54.0px" width="20" height="20" viewBox="0 0 16 16"><path d="M2.5,1.5 H9.5 L12.5,4.5 V13.5 H2.5 Z" stroke="#3c3c3c" stroke-width="1" fill="#fff" /><circle cx="9" cy="9" r="3" stroke="#3c3c3c" stroke-width="1.2" fill="#eef4fa"/><path d="M11.2,11.2 L14,14" stroke="#3c3c3c" stroke-width="1.8" fill="none" /></svg>
<svg class="a" style="left:1045.0px;top:54.0px" width="20" height="20" viewBox="0 0 16 16"><rect x="4.5" y="1.5" width="7" height="3.5" rx="0" stroke="#3c3c3c" stroke-width="1" fill="#fff"/><rect x="1.5" y="5" width="12" height="5.5" rx="1.5" stroke="#3c3c3c" stroke-width="1" fill="#d8dce0"/><rect x="4.5" y="8.5" width="6" height="4.5" rx="0" stroke="#3c3c3c" stroke-width="1" fill="#fff"/><path d="M9,12.5 H12.5 V10.8 L15.5,13 L12.5,15.2 V13.6 H9 Z" stroke="#1c5aa8" stroke-width="0.6" fill="#2c7ad0" /></svg>
<svg class="a" style="left:1068.0px;top:54.0px" width="20" height="20" viewBox="0 0 16 16"><path d="M2,5 L7,2.5 L12,5 V11 L7,13.5 L2,11 Z" stroke="#3c3c3c" stroke-width="1" fill="#eee" /><circle cx="10.5" cy="7" r="4" stroke="#2c7ad0" stroke-width="1" fill="#7cc0f0"/><path d="M8.5,5 Q10.5,8 9,10.5 M10,3.2 Q13,6 12.5,10" stroke="#e8a020" stroke-width="1.2" fill="none" /><path d="M7.5,8 Q10,6 14,7" stroke="#d03020" stroke-width="1" fill="none" /></svg>
<svg class="a" style="left:1097.0px;top:54.0px" width="20" height="20" viewBox="0 0 16 16"><path d="M4,1.5 L9.5,10 M12,1.5 L6.5,10" stroke="#3c3c3c" stroke-width="1.3" fill="none" /><circle cx="5" cy="12" r="2" stroke="#3c3c3c" stroke-width="1.2" fill="none"/><circle cx="11" cy="12" r="2" stroke="#3c3c3c" stroke-width="1.2" fill="none"/></svg>
<svg class="a" style="left:1120.0px;top:54.0px" width="20" height="20" viewBox="0 0 16 16"><path d="M2.5,1.5 H7.5 L9.5,3.5 V11.5 H2.5 Z" stroke="#3c3c3c" stroke-width="1" fill="#fff" /><path d="M6.5,4.5 H11.5 L13.5,6.5 V14.5 H6.5 Z" stroke="#3c3c3c" stroke-width="1" fill="#fff" /></svg>
<svg class="a" style="left:1143.0px;top:54.0px" width="20" height="20" viewBox="0 0 16 16"><rect x="2.5" y="2.5" width="9" height="11" rx="1" stroke="#3c3c3c" stroke-width="1" fill="#b8a078"/><rect x="5" y="1.2" width="4" height="2.6" rx="0" stroke="#3c3c3c" stroke-width="1" fill="#ddd"/><path d="M6.5,6.5 H11.5 L13.5,8.5 V14.5 H6.5 Z" stroke="#3c3c3c" stroke-width="1" fill="#fff" /></svg>
<svg class="a" style="left:1166.0px;top:54.0px" width="20" height="20" viewBox="0 0 16 16"><rect x="2.5" y="1.5" width="9" height="10" rx="0" stroke="#3c3c3c" stroke-width="1" fill="#fff"/><rect x="3.5" y="2.5" width="4" height="4" rx="0" stroke="none" stroke-width="0" fill="#2c5aa8"/><rect x="3.5" y="7" width="7" height="3.5" rx="0" stroke="none" stroke-width="0" fill="#9cc4e4"/><path d="M14.5,7 L9,12.5" stroke="#c87820" stroke-width="2.2" fill="none" /><path d="M9.5,11 L6,14.5 L8,15 L10.5,12.5 Z" stroke="#7a3c10" stroke-width="0.6" fill="#a85a20" /></svg>
<svg class="a" style="left:1189.0px;top:54.0px" width="20" height="20" viewBox="0 0 16 16"><rect x="2.5" y="7.5" width="8" height="5" rx="0" stroke="#3c3c3c" stroke-width="1" fill="#f4f4f4"/><circle cx="10.5" cy="12.5" r="2" stroke="#3c3c3c" stroke-width="1" fill="#fff"/><rect x="1.5" y="11.5" width="2" height="2" rx="0" stroke="#3c3c3c" stroke-width="1" fill="#fff"/><path d="M11,1.5 L8.5,6 H11 L9.5,10 L14,4.5 H11.5 L13,1.5 Z" stroke="#d08010" stroke-width="0.6" fill="#f8b820" /></svg>
<svg class="a" style="left:1221.0px;top:54.0px" width="20" height="20" viewBox="0 0 16 16"><path d="M12.5,14 Q14.5,4.5 7.5,4.8 Q5.8,5 5,6.2" stroke="#1c3c8c" stroke-width="2.6" fill="none" stroke-linecap="round"/><path d="M1.5,10.5 L2.5,3.8 L8.2,8.2 Z" stroke="#14306c" stroke-width="0.6" fill="#1c3c8c" stroke-linejoin="round"/></svg>
<svg class="a" style="left:1256.0px;top:54.0px" width="20" height="20" viewBox="0 0 16 16"><path d="M3.5,14 Q1.5,4.5 8.5,4.8 Q10.2,5 11,6.2" stroke="#d2d2d2" stroke-width="2.6" fill="none" stroke-linecap="round"/><path d="M14.5,10.5 L13.5,3.8 L7.8,8.2 Z" stroke="#cacaca" stroke-width="0.6" fill="#d2d2d2" stroke-linejoin="round"/></svg>
<svg class="a" style="left:1244px;top:62px" width="7" height="5"><path d="M0.5,0.5 L6.5,0.5 L3.5,4 Z" fill="#1c3a8c"/></svg>
<div class="sep" style="left:995px;top:55px;width:1px;height:19px;"></div>
<div class="sep" style="left:1093px;top:55px;width:1px;height:19px;"></div>
<div class="sep" style="left:1214px;top:55px;width:1px;height:19px;"></div>
<div class="tb" style="left:0px;top:79px;width:231px;height:24px;"></div>
<div class="a" style="left:1px;top:80px;width:8px;height:22px;background:#5e5e5e;"></div><div class="a" style="left:5px;top:84px;width:4px;height:14px;background:conic-gradient(#2a2a2a 25%,transparent 0) 0 0/2px 2px;"></div>
<div class="combo" style="left:9px;top:80px;width:175px;height:22px;background:#fff;border-color:#9ab8d4"><div class="t" style="left:7px;top:5px;font-size:10.5px;">Classica di AutoCAD</div><div class="dd" style="right:1px;top:1px;width:16px;height:18px;"></div><svg class="a" style="right:4px;top:6.5px" width="9" height="7"><path d="M1,1 L4.5,4.5 L8,1" fill="none" stroke="#4d6185" stroke-width="2"/></svg></div>
<svg class="a" style="left:185.0px;top:81.0px" width="20" height="20" viewBox="0 0 16 16"><path d="M8,1.5 L9.2,3.2 L11.2,2.6 L11.6,4.6 L13.6,5 L13,7 L14.5,8.2 L13,9.6 L13.6,11.4 L11.6,11.8 L11.2,13.8 L9.2,13.2 L8,14.8 L6.8,13.2 L4.8,13.8 L4.4,11.8 L2.4,11.4 L3,9.6 L1.5,8.2 L3,7 L2.4,5 L4.4,4.6 L4.8,2.6 L6.8,3.2 Z" stroke="#3c3c3c" stroke-width="1" fill="#f4f4f4" /><circle cx="8" cy="8.2" r="2.6" stroke="#3c3c3c" stroke-width="1" fill="#fff"/></svg>
<svg class="a" style="left:207.0px;top:81.0px" width="20" height="20" viewBox="0 0 16 16"><defs><linearGradient id="gwh" x1="0" y1="0" x2="0" y2="1"><stop offset="0" stop-color="#8a929c"/><stop offset="1" stop-color="#e4e6ea"/></linearGradient></defs><path d="M2.5,1.5 H13.5 M1.5,2.5 V13.5 M14.5,2.5 V13.5 M4,14.5 H12" stroke="#7a8490" stroke-width="1" fill="none" stroke-dasharray="1.2 1.2"/><path d="M3.5,13 V7.5 L8,3.5 L12.5,7.5 V13 Z" stroke="#4a525c" stroke-width="1" fill="url(#gwh)" stroke-linejoin="round"/><path d="M11,5.8 V3.5" stroke="#4a525c" stroke-width="1.2" fill="none" /></svg>
<div class="tb" style="left:231px;top:79px;width:403px;height:24px;"></div>
<div class="a" style="left:232px;top:80px;width:8px;height:22px;background:#5e5e5e;"></div><div class="a" style="left:236px;top:84px;width:4px;height:14px;background:conic-gradient(#2a2a2a 25%,transparent 0) 0 0/2px 2px;"></div>
<svg class="a" style="left:240.0px;top:81.0px" width="20" height="20" viewBox="0 0 16 16"><path d="M3,6 L9,3.5 L14,5 L8,7.5 Z M3,8.5 L8,10 L12,8.4 M3,11 L8,12.5 L10,11.7" stroke="#3c3c3c" stroke-width="1" fill="none" /><path d="M3,6 L9,3.5 L14,5 L8,7.5 Z" stroke="#3c3c3c" stroke-width="1" fill="#f4f4f4" /><rect x="9.5" y="9.5" width="5" height="5.5" rx="0.8" stroke="#3c3c3c" stroke-width="1" fill="#eef2f6"/><path d="M10.8,11.5 H13.2 M10.8,13.3 H13.2" stroke="#4a6a9a" stroke-width="1" fill="none" /></svg>
<div class="combo" style="left:263px;top:80px;width:299px;height:22px;background:#fff;border-color:#9ab8d4"><svg class="a" style="left:3.5px;top:2.5px" width="15" height="15" viewBox="0 0 16 16"><path d="M8,1.5 Q12,1.5 12,5.5 Q12,7.5 10,9.5 V11 H6 V9.5 Q4,7.5 4,5.5 Q4,1.5 8,1.5 Z" stroke="#a08010" stroke-width="1" fill="#fdf4a0" /><path d="M6.3,12.5 H9.7 M6.8,14 H9.2" stroke="#555" stroke-width="1.2" fill="none" /></svg><svg class="a" style="left:19.5px;top:2.5px" width="15" height="15" viewBox="0 0 16 16"><circle cx="8" cy="8" r="5.8" stroke="#b09010" stroke-width="1" fill="#f8e840"/><path d="M1.5,1.5 L3.5,3.5 M14.5,1.5 L12.5,3.5 M1.5,14.5 L3.5,12.5 M14.5,14.5 L12.5,12.5" stroke="#b09010" stroke-width="1" fill="none" /></svg><svg class="a" style="left:36.5px;top:2.5px" width="15" height="15" viewBox="0 0 16 16"><circle cx="6" cy="6" r="4.2" stroke="#4a86b8" stroke-width="1" fill="#a8cce8"/><path d="M6,1 V11 M1,6 H11 M2.5,2.5 L9.5,9.5 M9.5,2.5 L2.5,9.5" stroke="#6a9ac8" stroke-width="1" fill="none" /><circle cx="6" cy="6" r="1.6" stroke="#4a86b8" stroke-width="1" fill="#e8f0f8"/><rect x="7.5" y="8.5" width="6" height="5.5" rx="0" stroke="#3c3c3c" stroke-width="1" fill="#fff"/></svg><svg class="a" style="left:52.5px;top:2.5px" width="15" height="15" viewBox="0 0 16 16"><path d="M3,7 V4.5 Q3,1.5 6,1.5 Q9,1.5 9,4.5 V5.5" stroke="#8a7a10" stroke-width="1.6" fill="none" /><rect x="5.5" y="6.5" width="8" height="7.5" rx="1" stroke="#8a7a10" stroke-width="1" fill="#f4e040"/><path d="M7,9 H12 M7,11.5 H12" stroke="#c8b020" stroke-width="1" fill="none" /></svg><div class="a" style="left:69px;top:4px;width:11px;height:11px;border:1.5px solid #000;background:#fff"></div><div class="t" style="left:84.5px;top:5px;font-size:10.5px;">0</div><div class="dd" style="right:1px;top:1px;width:16px;height:18px;"></div><svg class="a" style="right:4px;top:6.5px" width="9" height="7"><path d="M1,1 L4.5,4.5 L8,1" fill="none" stroke="#4d6185" stroke-width="2"/></svg></div>
<svg class="a" style="left:563.0px;top:81.0px" width="20" height="20" viewBox="0 0 16 16"><path d="M2,7.5 L8,5 L14,7 L8,9.5 Z" stroke="#3c3c3c" stroke-width="1" fill="#f4f4f4" /><path d="M2,10 L8,12 L14,9.5 M2,12.5 L8,14.5 L14,12" stroke="#3c3c3c" stroke-width="1" fill="none" /><circle cx="8" cy="3.5" r="2.4" stroke="#2a78b4" stroke-width="1" fill="#9cc4e4"/></svg>
<svg class="a" style="left:587.0px;top:81.0px" width="20" height="20" viewBox="0 0 16 16"><path d="M4,7.5 L9.5,5 L14.5,7 L9,9.5 Z" stroke="#3c3c3c" stroke-width="1" fill="#f4f4f4" /><path d="M4,10 L9,12 L14.5,9.5 M4,12.5 L9,14.5 L14.5,12" stroke="#3c3c3c" stroke-width="1" fill="none" /><path d="M7,2.5 H2 M3.8,0.8 L2,2.5 L3.8,4.2" stroke="#3c3c3c" stroke-width="1.2" fill="none" /></svg>
<svg class="a" style="left:611.0px;top:81.0px" width="20" height="20" viewBox="0 0 16 16"><path d="M1.5,6 L7,3.5 L12,5 L6.5,7.5 Z" stroke="#3c3c3c" stroke-width="1" fill="#f4f4f4" /><path d="M1.5,8.5 L6.5,10 M1.5,11 L6.5,12.5" stroke="#3c3c3c" stroke-width="1" fill="none" /><rect x="8.5" y="8.5" width="6" height="6" rx="0.8" stroke="#3c3c3c" stroke-width="1" fill="#eef2f6"/><path d="M9.8,10.5 H13.2 M9.8,12.5 H13.2" stroke="#4a6a9a" stroke-width="1" fill="none" /></svg>
<div class="tb" style="left:635px;top:79px;width:582px;height:24px;"></div>
<div class="a" style="left:636px;top:80px;width:6px;height:22px;background:#5e5e5e;"></div><div class="a" style="left:638px;top:84px;width:4px;height:14px;background:conic-gradient(#2a2a2a 25%,transparent 0) 0 0/2px 2px;"></div>
<div class="combo" style="left:643px;top:80px;width:149px;height:22px;background:#fff;border-color:#9ab8d4"><div class="a" style="left:5px;top:5px;width:10px;height:10px;border:1px solid #000;background:#fff"></div><div class="t" style="left:20px;top:5px;font-size:10.5px;">DaLayer</div><div class="dd" style="right:1px;top:1px;width:16px;height:18px;"></div><svg class="a" style="right:4px;top:6.5px" width="9" height="7"><path d="M1,1 L4.5,4.5 L8,1" fill="none" stroke="#4d6185" stroke-width="2"/></svg></div>
<div class="a" style="left:793px;top:80px;width:4px;height:22px;background:#d8d8d8;border-left:1px solid #aaa"></div>
<div class="combo" style="left:798px;top:80px;width:159px;height:22px;background:#fff;border-color:#9ab8d4"><div class="a" style="left:5px;top:10px;width:59px;height:1px;background:#000"></div><div class="t" style="left:69px;top:5px;font-size:10.5px;">DaLayer</div><div class="dd" style="right:1px;top:1px;width:16px;height:18px;"></div><svg class="a" style="right:4px;top:6.5px" width="9" height="7"><path d="M1,1 L4.5,4.5 L8,1" fill="none" stroke="#4d6185" stroke-width="2"/></svg></div>
<div class="a" style="left:958px;top:80px;width:5px;height:22px;background:#d8d8d8;border-left:1px solid #aaa"></div>
<div class="combo" style="left:964px;top:80px;width:125px;height:22px;background:#fff;border-color:#9ab8d4"><div class="a" style="left:5px;top:10px;width:34px;height:1px;background:#000"></div><div class="t" style="left:44px;top:5px;font-size:10.5px;">DaLayer</div><div class="dd" style="right:1px;top:1px;width:16px;height:18px;"></div><svg class="a" style="right:4px;top:6.5px" width="9" height="7"><path d="M1,1 L4.5,4.5 L8,1" fill="none" stroke="#4d6185" stroke-width="2"/></svg></div>
<div class="a" style="left:1090px;top:80px;width:4px;height:22px;background:#d8d8d8;border-left:1px solid #aaa"></div>
<div class="combo" style="left:1095px;top:80px;width:119px;height:22px;background:#ece9d8;border-color:#d9d6c8"><div class="t" style="left:9px;top:5px;font-size:10.5px;color:#b9b6a6">DaColore</div><div class="a" style="right:1px;top:1px;width:16px;height:18px;border:1px solid #d8d5c6;border-radius:2px;background:#efecdf"></div><svg class="a" style="right:4px;top:6.5px" width="9" height="7"><path d="M1,1 L4.5,4.5 L8,1" fill="none" stroke="#c4c1b2" stroke-width="2"/></svg></div>
<div class="tb" style="left:0px;top:107px;width:25px;height:427px;"></div>
<div class="a" style="left:1px;top:108px;width:23px;height:8px;background:#5e5e5e;"></div><div class="a" style="left:5px;top:111px;width:15px;height:4px;background:conic-gradient(#2a2a2a 25%,transparent 0) 0 0/2px 2px;"></div>
<svg class="a" style="left:3.0px;top:118.0px" width="18" height="18" viewBox="0 0 16 16"><path d="M2.5,13.5 L13.5,2.5" stroke="#3c3c3c" stroke-width="1.1" fill="none" /><rect x="1.5" y="12.5" width="2" height="2" rx="0" stroke="#3c3c3c" stroke-width="1" fill="#fff"/><rect x="12.5" y="1.5" width="2" height="2" rx="0" stroke="#3c3c3c" stroke-width="1" fill="#fff"/></svg>
<svg class="a" style="left:3.0px;top:140.0px" width="18" height="18" viewBox="0 0 16 16"><path d="M3,13 L13,3" stroke="#3c3c3c" stroke-width="1.1" fill="none" /><path d="M1.5,14.5 L2.2,10.8 L5.2,13.8 Z M14.5,1.5 L13.8,5.2 L10.8,2.2 Z" stroke="#3c3c3c" stroke-width="0.5" fill="#3c3c3c" /><rect x="7.0" y="7.0" width="2" height="2" rx="0" stroke="#3c3c3c" stroke-width="1" fill="#fff"/></svg>
<svg class="a" style="left:3.0px;top:162.0px" width="18" height="18" viewBox="0 0 16 16"><path d="M2.5,12.5 H8.5 Q14,12.5 14,8 Q14,4 9.5,4" stroke="#3c3c3c" stroke-width="1.1" fill="none" /><rect x="1.5" y="11.5" width="2" height="2" rx="0" stroke="#3c3c3c" stroke-width="1" fill="#fff"/><rect x="7.5" y="11.5" width="2" height="2" rx="0" stroke="#3c3c3c" stroke-width="1" fill="#fff"/><rect x="8.5" y="3.0" width="2" height="2" rx="0" stroke="#3c3c3c" stroke-width="1" fill="#fff"/></svg>
<svg class="a" style="left:3.0px;top:184.0px" width="18" height="18" viewBox="0 0 16 16"><path d="M8,2 L14.5,6.8 L12,14 H4 L1.5,6.8 Z" stroke="#3c3c3c" stroke-width="1.1" fill="#f8f8f8" /></svg>
<svg class="a" style="left:3.0px;top:206.0px" width="18" height="18" viewBox="0 0 16 16"><rect x="2.5" y="4.5" width="11.5" height="8" rx="0" stroke="#3c3c3c" stroke-width="1.1" fill="#e8ecf0"/><rect x="1.5" y="11.5" width="2" height="2" rx="0" stroke="#3c3c3c" stroke-width="1" fill="#fff"/><rect x="13.0" y="3.5" width="2" height="2" rx="0" stroke="#3c3c3c" stroke-width="1" fill="#fff"/></svg>
<svg class="a" style="left:3.0px;top:228.0px" width="18" height="18" viewBox="0 0 16 16"><path d="M2.5,13.5 Q3.5,4.5 13.5,2.5" stroke="#3c3c3c" stroke-width="1.1" fill="none" /><rect x="1.5" y="12.5" width="2" height="2" rx="0" stroke="#3c3c3c" stroke-width="1" fill="#fff"/><rect x="12.5" y="1.5" width="2" height="2" rx="0" stroke="#3c3c3c" stroke-width="1" fill="#fff"/><rect x="4.5" y="5.5" width="2" height="2" rx="0" stroke="#3c3c3c" stroke-width="1" fill="#fff"/></svg>
<svg class="a" style="left:3.0px;top:250.0px" width="18" height="18" viewBox="0 0 16 16"><circle cx="8" cy="8" r="6.3" stroke="#3c3c3c" stroke-width="1.1" fill="#f4f4f4"/><path d="M8,8 L12,4" stroke="#3c3c3c" stroke-width="1" fill="none" /><rect x="7.0" y="7.0" width="2" height="2" rx="0" stroke="#3c3c3c" stroke-width="1" fill="#fff"/></svg>
<svg class="a" style="left:3.0px;top:272.0px" width="18" height="18" viewBox="0 0 16 16"><path d="M4.5,3 Q7,0.5 9,3 Q12.5,1.5 13,5 Q15.5,7.5 13,9.5 Q14,13 10.5,13 Q8,15.5 6,13 Q2.5,14 2.5,10.5 Q0.5,8 3,6.5 Q2,3.5 4.5,3 Z" stroke="#3c3c3c" stroke-width="1.1" fill="#f4f4f4" /></svg>
<svg class="a" style="left:3.0px;top:294.0px" width="18" height="18" viewBox="0 0 16 16"><path d="M1.5,12 Q3,3 7,7.5 T14.5,3" stroke="#3c3c3c" stroke-width="1.2" fill="none" /></svg>
<svg class="a" style="left:3.0px;top:316.0px" width="18" height="18" viewBox="0 0 16 16"><ellipse cx="8" cy="8.5" rx="6.3" ry="4.2" stroke="#3c3c3c" stroke-width="1.1" fill="#f4f4f4"/><rect x="0.7" y="7.5" width="2" height="2" rx="0" stroke="#3c3c3c" stroke-width="1" fill="#fff"/><rect x="13.3" y="7.5" width="2" height="2" rx="0" stroke="#3c3c3c" stroke-width="1" fill="#fff"/><rect x="7.0" y="3.3" width="2" height="2" rx="0" stroke="#3c3c3c" stroke-width="1" fill="#fff"/></svg>
<svg class="a" style="left:3.0px;top:338.0px" width="18" height="18" viewBox="0 0 16 16"><path d="M2,8 Q2,4 8,4 Q14,4.5 13.5,8.5 Q12.5,12 8,12" stroke="#3c3c3c" stroke-width="1.1" fill="none" /><rect x="1.0" y="7.0" width="2" height="2" rx="0" stroke="#3c3c3c" stroke-width="1" fill="#fff"/><rect x="7.0" y="11.0" width="2" height="2" rx="0" stroke="#3c3c3c" stroke-width="1" fill="#fff"/></svg>
<svg class="a" style="left:3.0px;top:360.0px" width="18" height="18" viewBox="0 0 16 16"><path d="M3.5,1.5 H9.5 L11.5,3.5 V8.5 H3.5 Z" stroke="#3c3c3c" stroke-width="1" fill="#f4f4f4" /><rect x="1.5" y="8.5" width="8" height="4.5" rx="0" stroke="#3c3c3c" stroke-width="1" fill="#f4f4f4"/><circle cx="9.5" cy="11" r="2.6" stroke="#3c3c3c" stroke-width="1" fill="#fff"/><path d="M12,12 L15,12 L15,15 Z" stroke="#000" stroke-width="0.3" fill="#000" /></svg>
<svg class="a" style="left:3.0px;top:382.0px" width="18" height="18" viewBox="0 0 16 16"><rect x="2.5" y="3.5" width="9" height="6" rx="0" stroke="#3c3c3c" stroke-width="1" fill="#f4f4f4"/><circle cx="11.5" cy="10.5" r="2.6" stroke="#3c3c3c" stroke-width="1" fill="#fff"/><rect x="1.5" y="8.5" width="2" height="2" rx="0" stroke="#3c3c3c" stroke-width="1" fill="#fff"/></svg>
<svg class="a" style="left:3.0px;top:404.0px" width="18" height="18" viewBox="0 0 16 16"><rect x="7" y="7" width="2" height="2" rx="0" stroke="#3c3c3c" stroke-width="1" fill="#fff"/></svg>
<svg class="a" style="left:3.0px;top:426.0px" width="18" height="18" viewBox="0 0 16 16"><rect x="3.5" y="3.5" width="9" height="9" rx="0" stroke="#3c3c3c" stroke-width="1" fill="#c8ccd2"/><path d="M3.5,7 L7,3.5 M3.5,10.5 L10.5,3.5 M5,12.5 L12.5,5 M8.5,12.5 L12.5,8.5" stroke="#555" stroke-width="0.8" fill="none" /><path d="M3.5,1 V15 M12.5,1 V15 M1,3.5 H15 M1,12.5 H15" stroke="#3c3c3c" stroke-width="1" fill="none" /><path d="M10,15 L15,10" stroke="#3c3c3c" stroke-width="1" fill="none" /></svg>
<svg class="a" style="left:3.0px;top:448.0px" width="18" height="18" viewBox="0 0 16 16"><defs><linearGradient id="gh" x1="0" y1="0" x2="0" y2="1"><stop offset="0" stop-color="#555"/><stop offset="1" stop-color="#f4f4f4"/></linearGradient></defs><rect x="3.5" y="3.5" width="9" height="9" rx="0" stroke="#3c3c3c" stroke-width="1" fill="url(#gh)"/><path d="M3.5,1 V15 M12.5,1 V15 M1,3.5 H15 M1,12.5 H15" stroke="#3c3c3c" stroke-width="1" fill="none" /><path d="M10,15 L15,10" stroke="#3c3c3c" stroke-width="1" fill="none" /></svg>
<svg class="a" style="left:3.0px;top:470.0px" width="18" height="18" viewBox="0 0 16 16"><path d="M2,3.5 H10.5 L14.5,7.5 V13.5 H2 Z" stroke="#3c3c3c" stroke-width="1.1" fill="#dfe3e8" /><ellipse cx="7.5" cy="8.8" rx="3.3" ry="2.6" stroke="#3c3c3c" stroke-width="1.1" fill="#fff"/></svg>
<svg class="a" style="left:3.0px;top:492.0px" width="18" height="18" viewBox="0 0 16 16"><rect x="1.5" y="1.5" width="13" height="13" rx="0" stroke="#3c3c3c" stroke-width="1.1" fill="#fff"/><rect x="1.5" y="1.5" width="13" height="3" rx="0" stroke="#3c3c3c" stroke-width="1" fill="#8a96a4"/><path d="M1.5,8 H14.5 M1.5,11.2 H14.5 M5.8,4.5 V14.5 M10.2,4.5 V14.5" stroke="#6a747e" stroke-width="1" fill="none" /></svg>
<svg class="a" style="left:3.0px;top:514.0px" width="18" height="18" viewBox="0 0 16 16"><text x="8" y="14.6" font-family="Liberation Sans, sans-serif" font-size="18.5" text-anchor="middle" fill="#2a2a2a">A</text></svg>
<div class="tb" style="left:0px;top:535px;width:25px;height:124px;"></div>
<div class="a" style="left:1px;top:536px;width:23px;height:6px;background:#5e5e5e;"></div><div class="a" style="left:5px;top:537px;width:15px;height:4px;background:conic-gradient(#2a2a2a 25%,transparent 0) 0 0/2px 2px;"></div>
<svg class="a" style="left:3.0px;top:545.5px" width="18" height="18" viewBox="0 0 16 16"><path d="M2,2 V7 M14,2 V7 M2,4.5 H14" stroke="#3c3c3c" stroke-width="1.1" fill="none" /><rect x="1.5" y="10.5" width="13" height="3" rx="0" stroke="#b07808" stroke-width="0.8" fill="#f8c020"/><path d="M3.5,10.5 v1.6 M5.5,10.5 v1.6 M7.5,10.5 v1.6 M9.5,10.5 v1.6 M11.5,10.5 v1.6" stroke="#8a5a08" stroke-width="0.8" fill="none" /></svg>
<svg class="a" style="left:3.0px;top:568.0px" width="18" height="18" viewBox="0 0 16 16"><path d="M2.5,1.5 L13.5,6 V9 H2.5 Z" stroke="#3c3c3c" stroke-width="1.1" fill="#e4e6ea" /><rect x="1.5" y="11.5" width="13" height="3" rx="0" stroke="#b07808" stroke-width="0.8" fill="#f8c020"/><path d="M3.5,11.5 v1.6 M5.5,11.5 v1.6 M7.5,11.5 v1.6 M9.5,11.5 v1.6 M11.5,11.5 v1.6" stroke="#8a5a08" stroke-width="0.8" fill="none" /></svg>
<svg class="a" style="left:3.0px;top:590.5px" width="18" height="18" viewBox="0 0 16 16"><path d="M2.5,3.5 L9.5,1.5 L14,5 L11,9.5 H2.5 Z" stroke="#3c3c3c" stroke-width="1.1" fill="#c8ccd2" /><rect x="1.5" y="11.5" width="13" height="3" rx="0" stroke="#b07808" stroke-width="0.8" fill="#f8c020"/><path d="M3.5,11.5 v1.6 M5.5,11.5 v1.6 M7.5,11.5 v1.6 M9.5,11.5 v1.6 M11.5,11.5 v1.6" stroke="#8a5a08" stroke-width="0.8" fill="none" /></svg>
<svg class="a" style="left:3.0px;top:618.0px" width="18" height="18" viewBox="0 0 16 16"><path d="M4,2 Q3,1 2,2 V4 H4 V13 Q4,14.5 5.5,14.5 H13.5 Q12,14.5 12,13 V2 Z" stroke="#3c3c3c" stroke-width="1" fill="#f4f4f4" /><path d="M6,5 H10 M6,7.5 H10 M6,10 H10" stroke="#8a96a4" stroke-width="1" fill="none" /></svg>
<svg class="a" style="left:3.0px;top:640.0px" width="18" height="18" viewBox="0 0 16 16"><path d="M2,1.5 V14 H14" stroke="#3c3c3c" stroke-width="1.1" fill="none" /><path d="M2,14 L8,8" stroke="#3c3c3c" stroke-width="1" fill="none" /><circle cx="10.5" cy="6" r="2.8" stroke="#3c3c3c" stroke-width="1.1" fill="#eef4fa"/><path d="M12.5,8 L14.5,10.5" stroke="#3c3c3c" stroke-width="1.6" fill="none" /></svg>
<div class="sep" style="left:4px;top:611px;width:18px;height:1px;"></div>
<div class="tb" style="left:28px;top:107px;width:25px;height:382px;"></div>
<div class="a" style="left:29px;top:108px;width:23px;height:8px;background:#5e5e5e;"></div><div class="a" style="left:33px;top:111px;width:15px;height:4px;background:conic-gradient(#2a2a2a 25%,transparent 0) 0 0/2px 2px;"></div>
<svg class="a" style="left:31.0px;top:118.0px" width="18" height="18" viewBox="0 0 16 16"><path d="M13.5,1 L15.5,3 L8,11 L5.5,8.5 Z" stroke="#8a6a3a" stroke-width="0.8" fill="#e8c080" /><path d="M5.5,8.5 L8,11 L6,13 Q4,13.5 3.2,12 Q2.8,10.5 3.8,9.8 Z" stroke="#a02808" stroke-width="0.8" fill="#e85020" /><path d="M1,14.5 H15" stroke="#3c3c3c" stroke-width="1" fill="none" /></svg>
<svg class="a" style="left:31.0px;top:140.0px" width="18" height="18" viewBox="0 0 16 16"><circle cx="4" cy="4" r="2.6" stroke="#3c3c3c" stroke-width="1.1" fill="#fff"/><circle cx="10" cy="9" r="2.6" stroke="#2a78b4" stroke-width="1.1" fill="#9cc4e4"/><circle cx="11.5" cy="11.5" r="2.6" stroke="#2a78b4" stroke-width="1.1" fill="#d8e8f6"/><path d="M8,3 Q12,2 12.5,5.5 M11,4.2 L12.5,5.8 L13.8,4" stroke="#3c3c3c" stroke-width="1" fill="none" /></svg>
<svg class="a" style="left:31.0px;top:162.0px" width="18" height="18" viewBox="0 0 16 16"><path d="M6,13.5 H1.5 L6,4 Z" stroke="#3c3c3c" stroke-width="1" fill="#f4f4f4" /><path d="M10,13.5 H14.5 L10,4 Z" stroke="#2a78b4" stroke-width="1" fill="#9cc4e4" /><path d="M8,1 V15" stroke="#3c3c3c" stroke-width="1.2" fill="none" /></svg>
<svg class="a" style="left:31.0px;top:184.0px" width="18" height="18" viewBox="0 0 16 16"><path d="M1.5,13.5 V10 H5 Q4,3 8.5,2.5 Q13,3 12,8.5 H15 V13.5 Z" stroke="#3c3c3c" stroke-width="1.2" fill="none" /><path d="M1.5,11.7 H7 Q5.5,5 8.5,4.7 Q11.5,5 10,10.5 H15" stroke="#2a78b4" stroke-width="1.4" fill="none" /></svg>
<svg class="a" style="left:31.0px;top:206.0px" width="18" height="18" viewBox="0 0 16 16"><rect x="1.5" y="1.5" width="5" height="5" rx="0" stroke="#3c3c3c" stroke-width="1.1" fill="#fff"/><rect x="9.5" y="1.5" width="5" height="5" rx="0" stroke="#2a78b4" stroke-width="1.1" fill="#d8e8f6"/><rect x="1.5" y="9.5" width="5" height="5" rx="0" stroke="#2a78b4" stroke-width="1.1" fill="#d8e8f6"/><rect x="9.5" y="9.5" width="5" height="5" rx="0" stroke="#2a78b4" stroke-width="1.1" fill="#d8e8f6"/></svg>
<svg class="a" style="left:31.0px;top:228.0px" width="18" height="18" viewBox="0 0 16 16"><path d="M8,1 V15 M1,8 H15" stroke="#3c3c3c" stroke-width="1.2" fill="none" /><path d="M6,3.2 L8,0.8 L10,3.2 Z M6,12.8 L8,15.2 L10,12.8 Z M3.2,6 L0.8,8 L3.2,10 Z M12.8,6 L15.2,8 L12.8,10 Z" stroke="#3c3c3c" stroke-width="0.4" fill="#3c3c3c" /><rect x="6.5" y="6.5" width="3" height="3" rx="0" stroke="#3c3c3c" stroke-width="1" fill="#fff"/></svg>
<svg class="a" style="left:31.0px;top:250.0px" width="18" height="18" viewBox="0 0 16 16"><path d="M9.5,3 A5.8,5.8 0 1 1 4,4.5" stroke="#3c3c3c" stroke-width="1.3" fill="none" /><path d="M6,1 L10,3 L6.5,5.5 Z" stroke="#3c3c3c" stroke-width="0.4" fill="#3c3c3c" /></svg>
<svg class="a" style="left:31.0px;top:272.0px" width="18" height="18" viewBox="0 0 16 16"><defs><linearGradient id="gs" x1="0" y1="0" x2="0" y2="1"><stop offset="0" stop-color="#3a8ad0"/><stop offset="1" stop-color="#e8f2fc"/></linearGradient></defs><rect x="1.5" y="1.5" width="13" height="13" rx="0" stroke="#2a78b4" stroke-width="1" fill="url(#gs)"/><rect x="1.5" y="4.5" width="10" height="10" rx="0" stroke="none" stroke-width="0" fill="#ececec"/><rect x="1.5" y="7.5" width="7" height="7" rx="0" stroke="#3c3c3c" stroke-width="1.1" fill="#f4f4f4"/><path d="M1.5,4.5 H11.5 V14.5" stroke="#2a78b4" stroke-width="1" fill="none" /></svg>
<svg class="a" style="left:31.0px;top:294.0px" width="18" height="18" viewBox="0 0 16 16"><rect x="1.5" y="1.5" width="7" height="13" rx="0" stroke="#3c3c3c" stroke-width="1.1" fill="#fff"/><path d="M8.5,1.5 H11.5 L14.5,14.5 H8.5" stroke="#2a78b4" stroke-width="1" fill="#9cc4e4" /><path d="M4,11.5 H10 M8.3,9.8 L10.3,11.5 L8.3,13.2" stroke="#000" stroke-width="1.2" fill="none" /></svg>
<svg class="a" style="left:31.0px;top:316.0px" width="18" height="18" viewBox="0 0 16 16"><path d="M1,8.5 H5" stroke="#000" stroke-width="1.2" fill="none" /><path d="M6,8.5 H15" stroke="#2a78b4" stroke-width="1" fill="none" stroke-dasharray="2 1.2"/><path d="M10,1.5 L4,14.5" stroke="#2a78b4" stroke-width="1.2" fill="none" /></svg>
<svg class="a" style="left:31.0px;top:338.0px" width="18" height="18" viewBox="0 0 16 16"><path d="M1,8.5 H5" stroke="#000" stroke-width="1.2" fill="none" /><path d="M5.5,8.5 H10" stroke="#000" stroke-width="1" fill="none" stroke-dasharray="1.5 1.2"/><path d="M14,1.5 L8,14.5" stroke="#2a78b4" stroke-width="1.2" fill="none" /></svg>
<svg class="a" style="left:31.0px;top:360.0px" width="18" height="18" viewBox="0 0 16 16"><path d="M14.5,4.5 H3.5 Q2.5,4.5 2.5,5.5 V11.5 Q2.5,12.5 3.5,12.5 H14.5" stroke="#3c3c3c" stroke-width="1.1" fill="#eef0f4" /><rect x="10" y="3" width="3" height="3" rx="0" stroke="none" stroke-width="0" fill="#2a78b4"/></svg>
<svg class="a" style="left:31.0px;top:382.0px" width="18" height="18" viewBox="0 0 16 16"><path d="M4.5,4.5 H3.5 Q2.5,4.5 2.5,5.5 V12 Q2.5,13 3.5,13 H12.5 Q13.5,13 13.5,12 V5.5 Q13.5,4.5 12.5,4.5 H11.5" stroke="#3c3c3c" stroke-width="1.1" fill="#eef0f4" /><rect x="4.2" y="3" width="3" height="3" rx="0" stroke="none" stroke-width="0" fill="#2a78b4"/><rect x="9" y="3" width="3" height="3" rx="0" stroke="none" stroke-width="0" fill="#2a78b4"/></svg>
<svg class="a" style="left:31.0px;top:404.0px" width="18" height="18" viewBox="0 0 16 16"><path d="M1.5,8 H14.5" stroke="#2a78b4" stroke-width="1" fill="none" /><path d="M4.5,5.5 L7,8 L4.5,10.5 M11.5,5.5 L9,8 L11.5,10.5" stroke="#2a78b4" stroke-width="1.3" fill="none" /></svg>
<svg class="a" style="left:31.0px;top:426.0px" width="18" height="18" viewBox="0 0 16 16"><path d="M2.5,14 V8.5 L9,2.5 H14 V14" stroke="#3c3c3c" stroke-width="1.1" fill="none" /><path d="M2.5,8.5 L9,2.5" stroke="#2a78b4" stroke-width="1.3" fill="none" /></svg>
<svg class="a" style="left:31.0px;top:448.0px" width="18" height="18" viewBox="0 0 16 16"><path d="M2.5,14 V9 Q2.5,2.5 10,2.5 H14 V14" stroke="#3c3c3c" stroke-width="1.1" fill="none" /><path d="M2.5,9 Q2.5,2.5 10,2.5" stroke="#2a78b4" stroke-width="1.3" fill="none" /></svg>
<svg class="a" style="left:31.0px;top:470.0px" width="18" height="18" viewBox="0 0 16 16"><path d="M1.5,8.5 H7 V13.5 H1.5 Z M1.5,8.5 L4,6 H9.5 L7,8.5 M9.5,6 V11 L7,13.5" stroke="#2a78b4" stroke-width="1" fill="#d8e8f6" /><path d="M8,5.5 H13 V10.5 M8,5.5 L10.5,3 H15 L13,5.5 M15,3 V8 L13,10.5" stroke="#2a78b4" stroke-width="1" fill="#d8e8f6" /></svg>
<div class="a" style="left:57px;top:107px;width:1191px;height:803px;background:#fff;border-left:2px solid #b0b0b0;border-top:2px solid #b0b0b0;"></div>
<div class="a" style="left:59px;top:109px;width:1170px;height:783px;background:#000"></div>
<svg class="a" style="left:0;top:0" width="1280" height="1024" viewBox="0 0 1280 1024" shape-rendering="crispEdges"><g><polyline points="115.50,420.50 437.50,286.00 603.75,189.50 796.25,305.00 1114.50,474.50 940.00,576.00 564.25,360.50 228.50,511.00 115.50,420.50" fill="none" stroke="#fff" stroke-width="1" />
<polyline points="136.75,427.00 439.70,298.70 605.50,203.75 795.00,315.00 1093.75,475.00 945.00,560.50 570.75,343.25 530.00,367.50 232.50,503.75 136.75,427.00" fill="none" stroke="#fff" stroke-width="1" />
<polyline points="115.50,420.50 115.50,643.75 228.75,734.25 228.75,511.00" fill="none" stroke="#fff" stroke-width="1" />
<polyline points="439.50,298.70 439.50,408.00" fill="none" stroke="#fff" stroke-width="1" />
<polyline points="605.50,203.75 605.50,363.50" fill="none" stroke="#fff" stroke-width="1" />
<polyline points="795.00,315.00 795.00,471.00" fill="none" stroke="#fff" stroke-width="1" />
<polyline points="564.40,360.50 564.40,583.80" fill="none" stroke="#fff" stroke-width="1" />
<polyline points="1114.50,474.50 1114.50,696.25 940.75,798.75" fill="none" stroke="#fff" stroke-width="1" />
<polyline points="938.75,576.00 938.75,798.75" fill="none" stroke="#fff" stroke-width="1" />
<polyline points="940.75,575.50 940.75,798.75" fill="none" stroke="#fff" stroke-width="1" />
<polyline points="228.75,734.25 564.40,583.80 655.30,636.00" fill="none" stroke="#fff" stroke-width="1" />
<polyline points="685.90,654.10 938.75,798.75" fill="none" stroke="#fff" stroke-width="1" />
<polyline points="655.30,636.00 655.30,546.30 685.90,563.75 685.90,654.10" fill="none" stroke="#fff" stroke-width="1" />
<polyline points="662.80,550.60 662.80,629.40" fill="none" stroke="#fff" stroke-width="1" />
<polyline points="667.50,553.40 667.50,622.80 655.30,636.00" fill="none" stroke="#fff" stroke-width="1" />
<polyline points="667.50,553.40 685.90,563.75" fill="none" stroke="#fff" stroke-width="0.6" />
<polyline points="363.00,474.50 393.75,461.25 393.75,517.50 363.00,531.75 363.00,474.50" fill="none" stroke="#fff" stroke-width="1" />
<polyline points="385.75,464.60 385.75,513.75 363.50,523.40" fill="none" stroke="#fff" stroke-width="1" />
<polyline points="385.75,513.75 393.75,517.50" fill="none" stroke="#fff" stroke-width="1" />
<polyline points="363.00,584.50 393.75,571.25 393.75,628.00 363.00,641.75 363.00,584.50" fill="none" stroke="#fff" stroke-width="1" />
<polyline points="385.75,574.60 385.75,623.75 363.50,633.40" fill="none" stroke="#fff" stroke-width="1" />
<polyline points="385.75,623.75 393.75,627.50" fill="none" stroke="#fff" stroke-width="1" />
<polyline points="498.25,413.75 528.75,400.50 528.75,457.50 498.25,470.50 498.25,413.75" fill="none" stroke="#fff" stroke-width="1" />
<polyline points="524.25,402.50 524.25,450.00 499.00,460.75" fill="none" stroke="#fff" stroke-width="1" />
<polyline points="524.25,450.00 528.75,457.50" fill="none" stroke="#fff" stroke-width="1" />
<polyline points="498.40,612.10 498.40,522.90 528.75,510.30" fill="none" stroke="#e81010" stroke-width="1" />
<polyline points="499.80,611.00 499.80,524.00 527.00,512.50" fill="none" stroke="#e81010" stroke-width="1" />
<polyline points="498.40,612.10 528.75,599.40" fill="none" stroke="#e81010" stroke-width="1" />
<polygon points="509.00,519.00 513.50,517.00 513.50,605.00 509.00,607.00" fill="#e81010" stroke="none" stroke-width="1"/>
<polyline points="511.20,519.00 511.20,606.00" fill="none" stroke="#700" stroke-width="0.8" />
<polygon points="524.00,512.50 527.50,511.00 527.50,599.00 524.00,600.50" fill="#e81010" stroke="none" stroke-width="1"/>
<polyline points="499.00,584.00 527.00,572.00" fill="none" stroke="#e81010" stroke-width="1.6" />
<polyline points="499.00,588.00 527.00,576.00" fill="none" stroke="#e81010" stroke-width="1" />
<polyline points="499.00,606.00 527.00,594.50" fill="none" stroke="#e81010" stroke-width="2" />
<polyline points="499.00,609.50 527.00,598.00" fill="none" stroke="#e81010" stroke-width="1" />
<polyline points="529.50,510.30 529.50,599.40" fill="none" stroke="#fff" stroke-width="1" />
<polyline points="498.40,590.00 505.00,587.00" fill="none" stroke="#fff" stroke-width="0.8" />
<polyline points="579.40,503.75 609.40,519.70 609.40,576.90 579.40,559.00 579.40,503.75" fill="none" stroke="#fff" stroke-width="1" />
<polyline points="587.80,508.40 587.80,555.30 579.40,559.00" fill="none" stroke="#fff" stroke-width="1" />
<polyline points="587.80,545.00 609.40,556.25" fill="none" stroke="#fff" stroke-width="1" />
<polyline points="587.80,508.40 609.40,519.70" fill="none" stroke="#fff" stroke-width="0.5" />
<polyline points="605.40,460.00 605.40,535.60" fill="none" stroke="#fff" stroke-width="1" />
<polyline points="604.70,535.60 557.00,565.00" fill="none" stroke="#fff" stroke-width="1" />
<polyline points="604.70,535.60 656.00,565.00" fill="none" stroke="#fff" stroke-width="1" />
<polyline points="594.40,536.50 604.70,531.00 615.40,536.50 604.70,542.00 594.40,536.50" fill="none" stroke="#fff" stroke-width="1" />
<polyline points="599.50,536.50 604.70,533.70 610.00,536.50 604.70,539.30 599.50,536.50" fill="none" stroke="#fff" stroke-width="1" />
<polyline points="538.75,574.00 548.50,561.50 552.50,561.30 556.20,565.60 557.50,570.60 555.60,573.60 538.75,574.00" fill="none" stroke="#fff" stroke-width="1" />
<polyline points="538.75,574.00 553.00,562.50" fill="none" stroke="#888" stroke-width="1" />
<polyline points="538.75,574.00 556.00,569.50" fill="none" stroke="#888" stroke-width="1" />
<polyline points="671.25,574.00 660.20,561.50 657.50,562.50 654.40,566.20 654.40,571.20 655.80,573.40 671.25,574.00" fill="none" stroke="#fff" stroke-width="1" />
<polyline points="671.25,574.00 657.00,564.00" fill="none" stroke="#888" stroke-width="1" />
<polyline points="671.25,574.00 654.80,569.50" fill="none" stroke="#888" stroke-width="1" />
<text x="597.8" y="447.8" font-size="25.6" textLength="15.4" font-family="DejaVu Sans Light, DejaVu Sans, Liberation Sans, sans-serif" font-weight="200" fill="#fff" lengthAdjust="spacingAndGlyphs">Z</text>
<text x="513.2" y="593.9" font-size="24.6" textLength="14" font-family="DejaVu Sans Light, DejaVu Sans, Liberation Sans, sans-serif" font-weight="200" fill="#fff" lengthAdjust="spacingAndGlyphs">X</text>
<text x="683.8" y="593.9" font-size="25.6" textLength="15" font-family="DejaVu Sans Light, DejaVu Sans, Liberation Sans, sans-serif" font-weight="200" fill="#fff" lengthAdjust="spacingAndGlyphs">Y</text>
<polygon points="642.25,438.75 656.65,446.89 656.65,504.39 642.25,496.25" fill="#f8f8f8" stroke="#fff" stroke-width="1"/>
<polygon points="643.85,441.85 655.05,448.18 655.05,501.28 643.85,494.95" fill="none" stroke="#000" stroke-width="0.6"/>
<polyline points="644.75,455.16 654.25,461.03" fill="none" stroke="#000" stroke-width="1" />
<polyline points="644.25,495.38 646.25,498.51" fill="none" stroke="#000" stroke-width="0.7" />
<polyline points="646.25,441.31 648.25,444.44" fill="none" stroke="#000" stroke-width="0.7" />
<polyline points="646.45,496.62 648.45,499.75" fill="none" stroke="#000" stroke-width="0.7" />
<polyline points="648.45,442.55 650.45,445.68" fill="none" stroke="#000" stroke-width="0.7" />
<polyline points="648.65,497.87 650.65,501.00" fill="none" stroke="#000" stroke-width="0.7" />
<polyline points="650.65,443.80 652.65,446.93" fill="none" stroke="#000" stroke-width="0.7" />
<polyline points="650.85,499.11 652.85,502.24" fill="none" stroke="#000" stroke-width="0.7" />
<polyline points="652.85,445.04 654.85,448.17" fill="none" stroke="#000" stroke-width="0.7" />
<polyline points="658.25,448.29 658.25,503.29" fill="none" stroke="#fff" stroke-width="1" />
<polyline points="656.65,504.39 658.25,503.29" fill="none" stroke="#fff" stroke-width="1" />
<polyline points="658.25,448.29 682.25,461.85" fill="none" stroke="#fff" stroke-width="1" />
<polyline points="658.25,503.29 682.25,516.85" fill="none" stroke="#fff" stroke-width="1" />
<polygon points="660.05,449.81 663.25,451.62 663.25,503.62 660.05,501.81" fill="#f01010" stroke="none" stroke-width="1"/>
<polygon points="659.75,497.64 681.65,510.01 681.65,514.51 659.75,502.14" fill="#f01010" stroke="none" stroke-width="1"/>
<polyline points="661.25,500.49 681.65,512.01" fill="none" stroke="#b02020" stroke-width="1" />
<polygon points="663.55,459.08 681.65,469.31 681.65,471.81 663.55,461.58" fill="#f01010" stroke="none" stroke-width="1"/>
<polyline points="664.85,453.52 664.85,493.52" fill="none" stroke="#fff" stroke-width="1" />
<polyline points="669.05,455.89 669.05,489.89" fill="none" stroke="#fff" stroke-width="1" />
<polygon points="672.05,457.59 674.05,458.72 674.05,508.72 672.05,507.59" fill="#b02020" stroke="none" stroke-width="1"/>
<polygon points="675.05,459.28 676.85,460.30 676.85,510.30 675.05,509.28" fill="#f01010" stroke="none" stroke-width="1"/>
<polyline points="678.25,463.09 678.25,507.09" fill="none" stroke="#fff" stroke-width="0.8" />
<polyline points="664.85,493.52 669.05,488.39 671.85,489.47" fill="none" stroke="#fff" stroke-width="1" />
<polyline points="677.45,496.14 681.65,499.51" fill="none" stroke="#fff" stroke-width="1" />
<polygon points="682.25,461.65 697.25,470.12 697.25,527.33 682.25,518.85" fill="#f8f8f8" stroke="#fff" stroke-width="1"/>
<polygon points="683.85,464.75 695.65,471.42 695.65,524.22 683.85,517.55" fill="none" stroke="#000" stroke-width="0.6"/>
<polyline points="685.25,478.55 694.25,484.63" fill="none" stroke="#000" stroke-width="1" />
<polyline points="684.25,517.98 686.25,521.11" fill="none" stroke="#000" stroke-width="0.7" />
<polyline points="686.25,464.11 688.25,467.24" fill="none" stroke="#000" stroke-width="0.7" />
<polyline points="686.45,519.22 688.45,522.35" fill="none" stroke="#000" stroke-width="0.7" />
<polyline points="688.45,465.35 690.45,468.48" fill="none" stroke="#000" stroke-width="0.7" />
<polyline points="688.65,520.47 690.65,523.60" fill="none" stroke="#000" stroke-width="0.7" />
<polyline points="690.65,466.60 692.65,469.73" fill="none" stroke="#000" stroke-width="0.7" />
<polyline points="690.85,521.71 692.85,524.84" fill="none" stroke="#000" stroke-width="0.7" />
<polyline points="692.85,467.84 694.85,470.97" fill="none" stroke="#000" stroke-width="0.7" />
<polygon points="736.25,493.75 750.65,501.89 750.65,559.39 736.25,551.25" fill="#f8f8f8" stroke="#fff" stroke-width="1"/>
<polygon points="737.85,496.85 749.05,503.18 749.05,556.28 737.85,549.95" fill="none" stroke="#000" stroke-width="0.6"/>
<polyline points="738.75,510.16 748.25,516.03" fill="none" stroke="#000" stroke-width="1" />
<polyline points="738.25,550.38 740.25,553.51" fill="none" stroke="#000" stroke-width="0.7" />
<polyline points="740.25,496.31 742.25,499.44" fill="none" stroke="#000" stroke-width="0.7" />
<polyline points="740.45,551.62 742.45,554.75" fill="none" stroke="#000" stroke-width="0.7" />
<polyline points="742.45,497.55 744.45,500.68" fill="none" stroke="#000" stroke-width="0.7" />
<polyline points="742.65,552.87 744.65,556.00" fill="none" stroke="#000" stroke-width="0.7" />
<polyline points="744.65,498.80 746.65,501.93" fill="none" stroke="#000" stroke-width="0.7" />
<polyline points="744.85,554.11 746.85,557.24" fill="none" stroke="#000" stroke-width="0.7" />
<polyline points="746.85,500.04 748.85,503.17" fill="none" stroke="#000" stroke-width="0.7" />
<polyline points="752.25,503.29 752.25,558.29" fill="none" stroke="#fff" stroke-width="1" />
<polyline points="750.65,559.39 752.25,558.29" fill="none" stroke="#fff" stroke-width="1" />
<polyline points="752.25,503.29 776.25,516.85" fill="none" stroke="#fff" stroke-width="1" />
<polyline points="752.25,558.29 776.25,571.85" fill="none" stroke="#fff" stroke-width="1" />
<polygon points="754.05,504.81 757.25,506.62 757.25,558.62 754.05,556.81" fill="#f01010" stroke="none" stroke-width="1"/>
<polygon points="753.75,552.64 775.65,565.01 775.65,569.51 753.75,557.14" fill="#f01010" stroke="none" stroke-width="1"/>
<polyline points="755.25,555.49 775.65,567.01" fill="none" stroke="#b02020" stroke-width="1" />
<polygon points="757.55,514.08 775.65,524.31 775.65,526.81 757.55,516.58" fill="#f01010" stroke="none" stroke-width="1"/>
<polyline points="758.85,508.52 758.85,548.52" fill="none" stroke="#fff" stroke-width="1" />
<polyline points="763.05,510.89 763.05,544.89" fill="none" stroke="#fff" stroke-width="1" />
<polygon points="766.05,512.59 768.05,513.72 768.05,563.72 766.05,562.59" fill="#b02020" stroke="none" stroke-width="1"/>
<polygon points="769.05,514.28 770.85,515.30 770.85,565.30 769.05,564.28" fill="#f01010" stroke="none" stroke-width="1"/>
<polyline points="772.25,518.09 772.25,562.09" fill="none" stroke="#fff" stroke-width="0.8" />
<polyline points="758.85,548.52 763.05,543.39 765.85,544.47" fill="none" stroke="#fff" stroke-width="1" />
<polyline points="771.45,551.14 775.65,554.51" fill="none" stroke="#fff" stroke-width="1" />
<polygon points="776.25,516.65 791.25,525.12 791.25,582.33 776.25,573.85" fill="#f8f8f8" stroke="#fff" stroke-width="1"/>
<polygon points="777.85,519.75 789.65,526.42 789.65,579.22 777.85,572.55" fill="none" stroke="#000" stroke-width="0.6"/>
<polyline points="779.25,533.54 788.25,539.63" fill="none" stroke="#000" stroke-width="1" />
<polyline points="778.25,572.98 780.25,576.11" fill="none" stroke="#000" stroke-width="0.7" />
<polyline points="780.25,519.11 782.25,522.24" fill="none" stroke="#000" stroke-width="0.7" />
<polyline points="780.45,574.22 782.45,577.35" fill="none" stroke="#000" stroke-width="0.7" />
<polyline points="782.45,520.35 784.45,523.48" fill="none" stroke="#000" stroke-width="0.7" />
<polyline points="782.65,575.47 784.65,578.60" fill="none" stroke="#000" stroke-width="0.7" />
<polyline points="784.65,521.60 786.65,524.73" fill="none" stroke="#000" stroke-width="0.7" />
<polyline points="784.85,576.71 786.85,579.84" fill="none" stroke="#000" stroke-width="0.7" />
<polyline points="786.85,522.84 788.85,525.97" fill="none" stroke="#000" stroke-width="0.7" />
<polygon points="810.00,536.50 824.40,544.64 824.40,602.14 810.00,594.00" fill="#f8f8f8" stroke="#fff" stroke-width="1"/>
<polygon points="811.60,539.60 822.80,545.93 822.80,599.03 811.60,592.70" fill="none" stroke="#000" stroke-width="0.6"/>
<polyline points="812.50,552.91 822.00,558.78" fill="none" stroke="#000" stroke-width="1" />
<polyline points="812.00,593.13 814.00,596.26" fill="none" stroke="#000" stroke-width="0.7" />
<polyline points="814.00,539.06 816.00,542.19" fill="none" stroke="#000" stroke-width="0.7" />
<polyline points="814.20,594.37 816.20,597.50" fill="none" stroke="#000" stroke-width="0.7" />
<polyline points="816.20,540.30 818.20,543.43" fill="none" stroke="#000" stroke-width="0.7" />
<polyline points="816.40,595.62 818.40,598.75" fill="none" stroke="#000" stroke-width="0.7" />
<polyline points="818.40,541.55 820.40,544.68" fill="none" stroke="#000" stroke-width="0.7" />
<polyline points="818.60,596.86 820.60,599.99" fill="none" stroke="#000" stroke-width="0.7" />
<polyline points="820.60,542.79 822.60,545.92" fill="none" stroke="#000" stroke-width="0.7" />
<polyline points="826.00,546.04 826.00,601.04" fill="none" stroke="#fff" stroke-width="1" />
<polyline points="824.40,602.14 826.00,601.04" fill="none" stroke="#fff" stroke-width="1" />
<polyline points="826.00,546.04 850.00,559.60" fill="none" stroke="#fff" stroke-width="1" />
<polyline points="826.00,601.04 850.00,614.60" fill="none" stroke="#fff" stroke-width="1" />
<polygon points="827.80,547.56 831.00,549.37 831.00,601.37 827.80,599.56" fill="#f01010" stroke="none" stroke-width="1"/>
<polygon points="827.50,595.39 849.40,607.76 849.40,612.26 827.50,599.89" fill="#f01010" stroke="none" stroke-width="1"/>
<polyline points="829.00,598.24 849.40,609.76" fill="none" stroke="#b02020" stroke-width="1" />
<polygon points="831.30,556.83 849.40,567.06 849.40,569.56 831.30,559.33" fill="#f01010" stroke="none" stroke-width="1"/>
<polyline points="832.60,551.27 832.60,591.27" fill="none" stroke="#fff" stroke-width="1" />
<polyline points="836.80,553.64 836.80,587.64" fill="none" stroke="#fff" stroke-width="1" />
<polygon points="839.80,555.34 841.80,556.47 841.80,606.47 839.80,605.34" fill="#b02020" stroke="none" stroke-width="1"/>
<polygon points="842.80,557.03 844.60,558.05 844.60,608.05 842.80,607.03" fill="#f01010" stroke="none" stroke-width="1"/>
<polyline points="846.00,560.84 846.00,604.84" fill="none" stroke="#fff" stroke-width="0.8" />
<polyline points="832.60,591.27 836.80,586.14 839.60,587.22" fill="none" stroke="#fff" stroke-width="1" />
<polyline points="845.20,593.89 849.40,597.26" fill="none" stroke="#fff" stroke-width="1" />
<polygon points="850.00,559.40 865.00,567.88 865.00,625.08 850.00,616.60" fill="#f8f8f8" stroke="#fff" stroke-width="1"/>
<polygon points="851.60,562.50 863.40,569.17 863.40,621.97 851.60,615.30" fill="none" stroke="#000" stroke-width="0.6"/>
<polyline points="853.00,576.29 862.00,582.38" fill="none" stroke="#000" stroke-width="1" />
<polyline points="852.00,615.73 854.00,618.86" fill="none" stroke="#000" stroke-width="0.7" />
<polyline points="854.00,561.86 856.00,564.99" fill="none" stroke="#000" stroke-width="0.7" />
<polyline points="854.20,616.97 856.20,620.10" fill="none" stroke="#000" stroke-width="0.7" />
<polyline points="856.20,563.10 858.20,566.23" fill="none" stroke="#000" stroke-width="0.7" />
<polyline points="856.40,618.22 858.40,621.35" fill="none" stroke="#000" stroke-width="0.7" />
<polyline points="858.40,564.35 860.40,567.48" fill="none" stroke="#000" stroke-width="0.7" />
<polyline points="858.60,619.46 860.60,622.59" fill="none" stroke="#000" stroke-width="0.7" />
<polyline points="860.60,565.59 862.60,568.72" fill="none" stroke="#000" stroke-width="0.7" />
<polygon points="879.25,576.25 893.65,584.39 893.65,641.89 879.25,633.75" fill="#f8f8f8" stroke="#fff" stroke-width="1"/>
<polygon points="880.85,579.35 892.05,585.68 892.05,638.78 880.85,632.45" fill="none" stroke="#000" stroke-width="0.6"/>
<polyline points="881.75,592.66 891.25,598.53" fill="none" stroke="#000" stroke-width="1" />
<polyline points="881.25,632.88 883.25,636.01" fill="none" stroke="#000" stroke-width="0.7" />
<polyline points="883.25,578.81 885.25,581.94" fill="none" stroke="#000" stroke-width="0.7" />
<polyline points="883.45,634.12 885.45,637.25" fill="none" stroke="#000" stroke-width="0.7" />
<polyline points="885.45,580.05 887.45,583.18" fill="none" stroke="#000" stroke-width="0.7" />
<polyline points="885.65,635.37 887.65,638.50" fill="none" stroke="#000" stroke-width="0.7" />
<polyline points="887.65,581.30 889.65,584.43" fill="none" stroke="#000" stroke-width="0.7" />
<polyline points="887.85,636.61 889.85,639.74" fill="none" stroke="#000" stroke-width="0.7" />
<polyline points="889.85,582.54 891.85,585.67" fill="none" stroke="#000" stroke-width="0.7" />
<polyline points="895.25,585.79 895.25,640.79" fill="none" stroke="#fff" stroke-width="1" />
<polyline points="893.65,641.89 895.25,640.79" fill="none" stroke="#fff" stroke-width="1" />
<polyline points="895.25,585.79 919.25,599.35" fill="none" stroke="#fff" stroke-width="1" />
<polyline points="895.25,640.79 919.25,654.35" fill="none" stroke="#fff" stroke-width="1" />
<polygon points="897.05,587.31 900.25,589.12 900.25,641.12 897.05,639.31" fill="#f01010" stroke="none" stroke-width="1"/>
<polygon points="896.75,635.14 918.65,647.51 918.65,652.01 896.75,639.64" fill="#f01010" stroke="none" stroke-width="1"/>
<polyline points="898.25,637.99 918.65,649.51" fill="none" stroke="#b02020" stroke-width="1" />
<polygon points="900.55,596.58 918.65,606.81 918.65,609.31 900.55,599.08" fill="#f01010" stroke="none" stroke-width="1"/>
<polyline points="901.85,591.02 901.85,631.02" fill="none" stroke="#fff" stroke-width="1" />
<polyline points="906.05,593.39 906.05,627.39" fill="none" stroke="#fff" stroke-width="1" />
<polygon points="909.05,595.09 911.05,596.22 911.05,646.22 909.05,645.09" fill="#b02020" stroke="none" stroke-width="1"/>
<polygon points="912.05,596.78 913.85,597.80 913.85,647.80 912.05,646.78" fill="#f01010" stroke="none" stroke-width="1"/>
<polyline points="915.25,600.59 915.25,644.59" fill="none" stroke="#fff" stroke-width="0.8" />
<polyline points="901.85,631.02 906.05,625.89 908.85,626.97" fill="none" stroke="#fff" stroke-width="1" />
<polyline points="914.45,633.64 918.65,637.01" fill="none" stroke="#fff" stroke-width="1" />
<polygon points="919.25,599.15 934.25,607.62 934.25,664.83 919.25,656.35" fill="#f8f8f8" stroke="#fff" stroke-width="1"/>
<polygon points="920.85,602.25 932.65,608.92 932.65,661.72 920.85,655.05" fill="none" stroke="#000" stroke-width="0.6"/>
<polyline points="922.25,616.04 931.25,622.13" fill="none" stroke="#000" stroke-width="1" />
<polyline points="921.25,655.48 923.25,658.61" fill="none" stroke="#000" stroke-width="0.7" />
<polyline points="923.25,601.61 925.25,604.74" fill="none" stroke="#000" stroke-width="0.7" />
<polyline points="923.45,656.72 925.45,659.85" fill="none" stroke="#000" stroke-width="0.7" />
<polyline points="925.45,602.85 927.45,605.98" fill="none" stroke="#000" stroke-width="0.7" />
<polyline points="925.65,657.97 927.65,661.10" fill="none" stroke="#000" stroke-width="0.7" />
<polyline points="927.65,604.10 929.65,607.23" fill="none" stroke="#000" stroke-width="0.7" />
<polyline points="927.85,659.21 929.85,662.34" fill="none" stroke="#000" stroke-width="0.7" />
<polyline points="929.85,605.34 931.85,608.47" fill="none" stroke="#000" stroke-width="0.7" />
<polygon points="736.25,594.75 750.65,602.89 750.65,660.39 736.25,652.25" fill="#f8f8f8" stroke="#fff" stroke-width="1"/>
<polygon points="737.85,597.85 749.05,604.18 749.05,657.28 737.85,650.95" fill="none" stroke="#000" stroke-width="0.6"/>
<polyline points="738.75,611.16 748.25,617.03" fill="none" stroke="#000" stroke-width="1" />
<polyline points="738.25,651.38 740.25,654.51" fill="none" stroke="#000" stroke-width="0.7" />
<polyline points="740.25,597.31 742.25,600.44" fill="none" stroke="#000" stroke-width="0.7" />
<polyline points="740.45,652.62 742.45,655.75" fill="none" stroke="#000" stroke-width="0.7" />
<polyline points="742.45,598.55 744.45,601.68" fill="none" stroke="#000" stroke-width="0.7" />
<polyline points="742.65,653.87 744.65,657.00" fill="none" stroke="#000" stroke-width="0.7" />
<polyline points="744.65,599.80 746.65,602.93" fill="none" stroke="#000" stroke-width="0.7" />
<polyline points="744.85,655.11 746.85,658.24" fill="none" stroke="#000" stroke-width="0.7" />
<polyline points="746.85,601.04 748.85,604.17" fill="none" stroke="#000" stroke-width="0.7" />
<polyline points="752.25,604.29 752.25,659.29" fill="none" stroke="#fff" stroke-width="1" />
<polyline points="750.65,660.39 752.25,659.29" fill="none" stroke="#fff" stroke-width="1" />
<polyline points="752.25,604.29 776.25,617.85" fill="none" stroke="#fff" stroke-width="1" />
<polyline points="752.25,659.29 776.25,672.85" fill="none" stroke="#fff" stroke-width="1" />
<polygon points="754.05,605.81 757.25,607.62 757.25,659.62 754.05,657.81" fill="#f01010" stroke="none" stroke-width="1"/>
<polygon points="753.75,653.64 775.65,666.01 775.65,670.51 753.75,658.14" fill="#f01010" stroke="none" stroke-width="1"/>
<polyline points="755.25,656.49 775.65,668.01" fill="none" stroke="#b02020" stroke-width="1" />
<polygon points="757.55,615.08 775.65,625.31 775.65,627.81 757.55,617.58" fill="#f01010" stroke="none" stroke-width="1"/>
<polyline points="758.85,609.52 758.85,649.52" fill="none" stroke="#fff" stroke-width="1" />
<polyline points="763.05,611.89 763.05,645.89" fill="none" stroke="#fff" stroke-width="1" />
<polygon points="766.05,613.59 768.05,614.72 768.05,664.72 766.05,663.59" fill="#b02020" stroke="none" stroke-width="1"/>
<polygon points="769.05,615.28 770.85,616.30 770.85,666.30 769.05,665.28" fill="#f01010" stroke="none" stroke-width="1"/>
<polyline points="772.25,619.09 772.25,663.09" fill="none" stroke="#fff" stroke-width="0.8" />
<polyline points="758.85,649.52 763.05,644.39 765.85,645.47" fill="none" stroke="#fff" stroke-width="1" />
<polyline points="771.45,652.14 775.65,655.51" fill="none" stroke="#fff" stroke-width="1" />
<polygon points="776.25,617.65 791.25,626.12 791.25,683.33 776.25,674.85" fill="#f8f8f8" stroke="#fff" stroke-width="1"/>
<polygon points="777.85,620.75 789.65,627.42 789.65,680.22 777.85,673.55" fill="none" stroke="#000" stroke-width="0.6"/>
<polyline points="779.25,634.54 788.25,640.63" fill="none" stroke="#000" stroke-width="1" />
<polyline points="778.25,673.98 780.25,677.11" fill="none" stroke="#000" stroke-width="0.7" />
<polyline points="780.25,620.11 782.25,623.24" fill="none" stroke="#000" stroke-width="0.7" />
<polyline points="780.45,675.22 782.45,678.35" fill="none" stroke="#000" stroke-width="0.7" />
<polyline points="782.45,621.35 784.45,624.48" fill="none" stroke="#000" stroke-width="0.7" />
<polyline points="782.65,676.47 784.65,679.60" fill="none" stroke="#000" stroke-width="0.7" />
<polyline points="784.65,622.60 786.65,625.73" fill="none" stroke="#000" stroke-width="0.7" />
<polyline points="784.85,677.71 786.85,680.84" fill="none" stroke="#000" stroke-width="0.7" />
<polyline points="786.85,623.84 788.85,626.97" fill="none" stroke="#000" stroke-width="0.7" />
<polygon points="810.00,637.50 824.40,645.64 824.40,703.14 810.00,695.00" fill="#f8f8f8" stroke="#fff" stroke-width="1"/>
<polygon points="811.60,640.60 822.80,646.93 822.80,700.03 811.60,693.70" fill="none" stroke="#000" stroke-width="0.6"/>
<polyline points="812.50,653.91 822.00,659.78" fill="none" stroke="#000" stroke-width="1" />
<polyline points="812.00,694.13 814.00,697.26" fill="none" stroke="#000" stroke-width="0.7" />
<polyline points="814.00,640.06 816.00,643.19" fill="none" stroke="#000" stroke-width="0.7" />
<polyline points="814.20,695.37 816.20,698.50" fill="none" stroke="#000" stroke-width="0.7" />
<polyline points="816.20,641.30 818.20,644.43" fill="none" stroke="#000" stroke-width="0.7" />
<polyline points="816.40,696.62 818.40,699.75" fill="none" stroke="#000" stroke-width="0.7" />
<polyline points="818.40,642.55 820.40,645.68" fill="none" stroke="#000" stroke-width="0.7" />
<polyline points="818.60,697.86 820.60,700.99" fill="none" stroke="#000" stroke-width="0.7" />
<polyline points="820.60,643.79 822.60,646.92" fill="none" stroke="#000" stroke-width="0.7" />
<polyline points="826.00,647.04 826.00,702.04" fill="none" stroke="#fff" stroke-width="1" />
<polyline points="824.40,703.14 826.00,702.04" fill="none" stroke="#fff" stroke-width="1" />
<polyline points="826.00,647.04 850.00,660.60" fill="none" stroke="#fff" stroke-width="1" />
<polyline points="826.00,702.04 850.00,715.60" fill="none" stroke="#fff" stroke-width="1" />
<polygon points="827.80,648.56 831.00,650.37 831.00,702.37 827.80,700.56" fill="#f01010" stroke="none" stroke-width="1"/>
<polygon points="827.50,696.39 849.40,708.76 849.40,713.26 827.50,700.89" fill="#f01010" stroke="none" stroke-width="1"/>
<polyline points="829.00,699.24 849.40,710.76" fill="none" stroke="#b02020" stroke-width="1" />
<polygon points="831.30,657.83 849.40,668.06 849.40,670.56 831.30,660.33" fill="#f01010" stroke="none" stroke-width="1"/>
<polyline points="832.60,652.27 832.60,692.27" fill="none" stroke="#fff" stroke-width="1" />
<polyline points="836.80,654.64 836.80,688.64" fill="none" stroke="#fff" stroke-width="1" />
<polygon points="839.80,656.34 841.80,657.47 841.80,707.47 839.80,706.34" fill="#b02020" stroke="none" stroke-width="1"/>
<polygon points="842.80,658.03 844.60,659.05 844.60,709.05 842.80,708.03" fill="#f01010" stroke="none" stroke-width="1"/>
<polyline points="846.00,661.84 846.00,705.84" fill="none" stroke="#fff" stroke-width="0.8" />
<polyline points="832.60,692.27 836.80,687.14 839.60,688.22" fill="none" stroke="#fff" stroke-width="1" />
<polyline points="845.20,694.89 849.40,698.26" fill="none" stroke="#fff" stroke-width="1" />
<polygon points="850.00,660.40 865.00,668.88 865.00,726.08 850.00,717.60" fill="#f8f8f8" stroke="#fff" stroke-width="1"/>
<polygon points="851.60,663.50 863.40,670.17 863.40,722.97 851.60,716.30" fill="none" stroke="#000" stroke-width="0.6"/>
<polyline points="853.00,677.29 862.00,683.38" fill="none" stroke="#000" stroke-width="1" />
<polyline points="852.00,716.73 854.00,719.86" fill="none" stroke="#000" stroke-width="0.7" />
<polyline points="854.00,662.86 856.00,665.99" fill="none" stroke="#000" stroke-width="0.7" />
<polyline points="854.20,717.97 856.20,721.10" fill="none" stroke="#000" stroke-width="0.7" />
<polyline points="856.20,664.10 858.20,667.23" fill="none" stroke="#000" stroke-width="0.7" />
<polyline points="856.40,719.22 858.40,722.35" fill="none" stroke="#000" stroke-width="0.7" />
<polyline points="858.40,665.35 860.40,668.48" fill="none" stroke="#000" stroke-width="0.7" />
<polyline points="858.60,720.46 860.60,723.59" fill="none" stroke="#000" stroke-width="0.7" />
<polyline points="860.60,666.59 862.60,669.72" fill="none" stroke="#000" stroke-width="0.7" />
<polygon points="879.25,677.50 893.65,685.64 893.65,743.14 879.25,735.00" fill="#f8f8f8" stroke="#fff" stroke-width="1"/>
<polygon points="880.85,680.60 892.05,686.93 892.05,740.03 880.85,733.70" fill="none" stroke="#000" stroke-width="0.6"/>
<polyline points="881.75,693.91 891.25,699.78" fill="none" stroke="#000" stroke-width="1" />
<polyline points="881.25,734.13 883.25,737.26" fill="none" stroke="#000" stroke-width="0.7" />
<polyline points="883.25,680.06 885.25,683.19" fill="none" stroke="#000" stroke-width="0.7" />
<polyline points="883.45,735.37 885.45,738.50" fill="none" stroke="#000" stroke-width="0.7" />
<polyline points="885.45,681.30 887.45,684.43" fill="none" stroke="#000" stroke-width="0.7" />
<polyline points="885.65,736.62 887.65,739.75" fill="none" stroke="#000" stroke-width="0.7" />
<polyline points="887.65,682.55 889.65,685.68" fill="none" stroke="#000" stroke-width="0.7" />
<polyline points="887.85,737.86 889.85,740.99" fill="none" stroke="#000" stroke-width="0.7" />
<polyline points="889.85,683.79 891.85,686.92" fill="none" stroke="#000" stroke-width="0.7" />
<polyline points="895.25,687.04 895.25,742.04" fill="none" stroke="#fff" stroke-width="1" />
<polyline points="893.65,743.14 895.25,742.04" fill="none" stroke="#fff" stroke-width="1" />
<polyline points="895.25,687.04 919.25,700.60" fill="none" stroke="#fff" stroke-width="1" />
<polyline points="895.25,742.04 919.25,755.60" fill="none" stroke="#fff" stroke-width="1" />
<polygon points="897.05,688.56 900.25,690.37 900.25,742.37 897.05,740.56" fill="#f01010" stroke="none" stroke-width="1"/>
<polygon points="896.75,736.39 918.65,748.76 918.65,753.26 896.75,740.89" fill="#f01010" stroke="none" stroke-width="1"/>
<polyline points="898.25,739.24 918.65,750.76" fill="none" stroke="#b02020" stroke-width="1" />
<polygon points="900.55,697.83 918.65,708.06 918.65,710.56 900.55,700.33" fill="#f01010" stroke="none" stroke-width="1"/>
<polyline points="901.85,692.27 901.85,732.27" fill="none" stroke="#fff" stroke-width="1" />
<polyline points="906.05,694.64 906.05,728.64" fill="none" stroke="#fff" stroke-width="1" />
<polygon points="909.05,696.34 911.05,697.47 911.05,747.47 909.05,746.34" fill="#b02020" stroke="none" stroke-width="1"/>
<polygon points="912.05,698.03 913.85,699.05 913.85,749.05 912.05,748.03" fill="#f01010" stroke="none" stroke-width="1"/>
<polyline points="915.25,701.84 915.25,745.84" fill="none" stroke="#fff" stroke-width="0.8" />
<polyline points="901.85,732.27 906.05,727.14 908.85,728.22" fill="none" stroke="#fff" stroke-width="1" />
<polyline points="914.45,734.89 918.65,738.26" fill="none" stroke="#fff" stroke-width="1" />
<polygon points="919.25,700.40 934.25,708.88 934.25,766.08 919.25,757.60" fill="#f8f8f8" stroke="#fff" stroke-width="1"/>
<polygon points="920.85,703.50 932.65,710.17 932.65,762.97 920.85,756.30" fill="none" stroke="#000" stroke-width="0.6"/>
<polyline points="922.25,717.29 931.25,723.38" fill="none" stroke="#000" stroke-width="1" />
<polyline points="921.25,756.73 923.25,759.86" fill="none" stroke="#000" stroke-width="0.7" />
<polyline points="923.25,702.86 925.25,705.99" fill="none" stroke="#000" stroke-width="0.7" />
<polyline points="923.45,757.97 925.45,761.10" fill="none" stroke="#000" stroke-width="0.7" />
<polyline points="925.45,704.10 927.45,707.23" fill="none" stroke="#000" stroke-width="0.7" />
<polyline points="925.65,759.22 927.65,762.35" fill="none" stroke="#000" stroke-width="0.7" />
<polyline points="927.65,705.35 929.65,708.48" fill="none" stroke="#000" stroke-width="0.7" />
<polyline points="927.85,760.46 929.85,763.59" fill="none" stroke="#000" stroke-width="0.7" />
<polyline points="929.85,706.59 931.85,709.72" fill="none" stroke="#000" stroke-width="0.7" />
<polyline points="1211.00,205.00 1226.00,213.50" fill="none" stroke="#2a8a2a" stroke-width="1" />
<polyline points="1196.00,232.00 1226.00,214.00" fill="none" stroke="#b02020" stroke-width="1" />
<rect x="1224.5" y="211.5" width="4" height="5" fill="none" stroke="#6a6" stroke-width="1"/>
<polyline points="1228.50,176.00 1228.50,235.00" fill="none" stroke="#1030c0" stroke-width="1" /></g></svg>
<div class="a" style="left:71px;top:122px;width:540px;height:24px;background:#ececec;border:1px solid #555;"></div>
<div class="a" style="left:72px;top:123px;width:8px;height:22px;background:#484848;"></div>
<div class="a" style="left:74px;top:126px;width:4px;height:16px;background:conic-gradient(#141414 25%,transparent 0) 0 0/2px 2px;"></div>
<div class="a" style="left:602px;top:123px;width:8px;height:22px;background:#484848"></div>
<svg class="a" style="left:603px;top:125px" width="7" height="7"><path d="M1,1 L6,6 M6,1 L1,6" stroke="#fff" stroke-width="1.3"/></svg>
<svg class="a" style="left:80.0px;top:124.0px" width="20" height="20" viewBox="0 0 16 16"><path d="M3,3 L6.5,5 V13.5 L3,11.5 Z" stroke="#56606c" stroke-width="1" fill="#c4ccd6" stroke-linejoin="round" stroke-linecap="round"/><path d="M6.5,5 L12,3.5 V8 L10,8.6 V12.5 L6.5,13.5 Z" stroke="#56606c" stroke-width="1" fill="#eef0f4" stroke-linejoin="round" stroke-linecap="round"/><path d="M3,3 L8.5,1.8 L12,3.5" stroke="#56606c" stroke-width="1" fill="#f8f8fa" stroke-linejoin="round" stroke-linecap="round"/></svg>
<svg class="a" style="left:103.0px;top:124.0px" width="20" height="20" viewBox="0 0 16 16"><path d="M2.5,4.5 Q2.5,3.8 3.2,3.6 L6,2 H13 Q13.8,2 13.8,2.8 V10.5 L11.5,13.2 Q11.2,13.8 10.5,13.8 H3.3 Q2.5,13.8 2.5,13 Z" stroke="#56606c" stroke-width="1" fill="#f2f4f7" stroke-linejoin="round" stroke-linecap="round"/><path d="M2.8,4.3 H10.6 Q11.4,4.3 11.4,5.1 V13.5 M11.3,4.5 L13.6,2.3" stroke="#56606c" stroke-width="0.9" fill="none" stroke-linejoin="round" stroke-linecap="round"/><rect x="3.6" y="5.4" width="6.8" height="7.4" rx="0.5" stroke="none" stroke-width="0" fill="#dfe4ea"/></svg>
<svg class="a" style="left:127.0px;top:124.0px" width="20" height="20" viewBox="0 0 16 16"><path d="M3,2.5 Q2.3,2.2 2.3,3 V12.8 Q2.3,13.6 3.1,13.6 H10.5 L13.6,10.8 Z" stroke="#56606c" stroke-width="1" fill="#f4f6f8" stroke-linejoin="round" stroke-linecap="round"/><path d="M3.5,5 V12.4 H10.2 Z" stroke="none" stroke-width="0" fill="#dfe4ea" /><path d="M10.5,13.6 L13.6,10.8" stroke="#56606c" stroke-width="1" fill="none" /></svg>
<svg class="a" style="left:150.0px;top:124.0px" width="20" height="20" viewBox="0 0 16 16"><path d="M8,2 L13.6,11.8 Q8,15.6 2.4,11.8 Z" stroke="#56606c" stroke-width="1" fill="#f2f4f7" stroke-linejoin="round" stroke-linecap="round"/><path d="M8,3 L9.3,13.6 L7,13.8 Z" stroke="none" stroke-width="0" fill="#ccd3dc" /></svg>
<svg class="a" style="left:173.0px;top:124.0px" width="20" height="20" viewBox="0 0 16 16"><defs><radialGradient id="gsp" cx="0.4" cy="0.35" r="0.7"><stop offset="0" stop-color="#fff"/><stop offset="1" stop-color="#c4ccd6"/></radialGradient></defs><circle cx="8" cy="8" r="6.2" stroke="#56606c" stroke-width="1" fill="url(#gsp)"/></svg>
<svg class="a" style="left:196.0px;top:124.0px" width="20" height="20" viewBox="0 0 16 16"><path d="M2.6,4 Q2.6,2.3 8,2.3 Q13.4,2.3 13.4,4 V12 Q13.4,13.8 8,13.8 Q2.6,13.8 2.6,12 Z" stroke="#56606c" stroke-width="1" fill="#eef0f4" stroke-linejoin="round" stroke-linecap="round"/><rect x="7.2" y="5.5" width="3" height="7.5" rx="0.5" stroke="none" stroke-width="0" fill="#ccd3dc"/><path d="M2.6,4 Q2.6,5.4 8,5.4 Q13.4,5.4 13.4,4" stroke="#56606c" stroke-width="0.7" fill="none" /></svg>
<svg class="a" style="left:219.0px;top:124.0px" width="20" height="20" viewBox="0 0 16 16"><circle cx="8" cy="8" r="6.2" stroke="#56606c" stroke-width="1" fill="#e6eaef"/><circle cx="8" cy="8" r="4.1" stroke="#56606c" stroke-width="1.6" fill="#f8f8fa"/><circle cx="8" cy="8" r="2.2" stroke="#56606c" stroke-width="0.8" fill="#fff"/></svg>
<svg class="a" style="left:242.0px;top:124.0px" width="20" height="20" viewBox="0 0 16 16"><path d="M8,2.5 L14,10.3 L8.3,13.8 L2,10.3 Z" stroke="#56606c" stroke-width="1" fill="#f4f6f8" stroke-linejoin="round" stroke-linecap="round"/><path d="M8,2.5 L8.3,13.8 L14,10.3 Z" stroke="#56606c" stroke-width="0.8" fill="#ccd3dc" stroke-linejoin="round" stroke-linecap="round"/></svg>
<svg class="a" style="left:265.0px;top:124.0px" width="20" height="20" viewBox="0 0 16 16"><path d="M3.5,3 H12.5 Q14,3 14,4 Q14,5.2 12.5,5.2 H3.5 Q2,5.2 2,6.4 Q2,7.6 3.5,7.6 H12.5 Q14,7.6 14,8.8 Q14,10 12.5,10 H3.5 Q2,10 2,11.2 Q2,12.4 3.5,12.4 H12.5 Q14,12.4 14,13.4" stroke="#4a525c" stroke-width="1.15" fill="none" stroke-linejoin="round" stroke-linecap="round"/></svg>
<svg class="a" style="left:288.0px;top:124.0px" width="20" height="20" viewBox="0 0 16 16"><path d="M1.5,9 L11,3 L14.5,6.5 L5,12.5 Z" stroke="#98a2ae" stroke-width="0.9" fill="#ccd3dc" stroke-linejoin="round" stroke-linecap="round"/><path d="M4.5,7.1 L8,10.6 M7.8,5 L11.2,8.5 M3.3,10.8 L12.8,4.8" stroke="#f4f6f8" stroke-width="0.8" fill="none" /></svg>
<svg class="a" style="left:316.0px;top:124.0px" width="20" height="20" viewBox="0 0 16 16"><path d="M2.5,5.5 H10.5 V13.5 H2.5 Z" stroke="#2a78b4" stroke-width="1.1" fill="#d4e6f6" stroke-linejoin="round" stroke-linecap="round"/><path d="M2.5,5.5 L5.5,2.5 H13.5 L10.5,5.5 Z" stroke="#2a78b4" stroke-width="1.1" fill="#a8d0ee" stroke-linejoin="round" stroke-linecap="round"/><path d="M13.5,2.5 V10.5 L10.5,13.5 V5.5 Z" stroke="#2a78b4" stroke-width="1.1" fill="#7cb4e0" stroke-linejoin="round" stroke-linecap="round"/><path d="M6.5,12 V7.5 M4.8,9.2 L6.5,7.2 L8.2,9.2" stroke="#111" stroke-width="1.1" fill="none" /></svg>
<svg class="a" style="left:339.0px;top:124.0px" width="20" height="20" viewBox="0 0 16 16"><path d="M2.5,8.5 H9.5 V14 H2.5 Z M2.5,8.5 L5,6 H12 L9.5,8.5 M12,6 V11.5 L9.5,14" stroke="#2a78b4" stroke-width="1.1" fill="#d8e8f6" /><path d="M7.5,6.5 V1.5 M5.8,3.3 L7.5,1.2 L9.2,3.3" stroke="#3c3c3c" stroke-width="1.2" fill="none" /><path d="M12.5,1 L15,3.5" stroke="#c88010" stroke-width="1.6" fill="none" /></svg>
<svg class="a" style="left:362.0px;top:124.0px" width="20" height="20" viewBox="0 0 16 16"><path d="M2,6 Q4,2 8,4 Q13,6 13.5,11" stroke="#2a78b4" stroke-width="1.3" fill="none" /><path d="M2,6 Q1,9 4,10 Q9,8 10,13.5 L13.5,11" stroke="#2a78b4" stroke-width="1.2" fill="#9cc4e4" /><circle cx="3" cy="4" r="1.8" stroke="#3c3c3c" stroke-width="1" fill="#fff"/></svg>
<svg class="a" style="left:385.0px;top:124.0px" width="20" height="20" viewBox="0 0 16 16"><path d="M3,6 Q8,2 13,6 V12 Q8,15 3,12 Z" stroke="#2a78b4" stroke-width="1.2" fill="#9cc4e4" /><path d="M5.5,6.5 Q8,5 10.5,6.5 Q8,8 5.5,6.5" stroke="#2a78b4" stroke-width="1" fill="#fff" /><path d="M2,3 Q8,-1 13.5,3 M12,1 L13.8,3.2 L11.3,3.8" stroke="#3c3c3c" stroke-width="1" fill="none" /></svg>
<svg class="a" style="left:408.0px;top:124.0px" width="20" height="20" viewBox="0 0 16 16"><path d="M2.5,2.5 H13.5 V6 Q12.5,9 10.8,11 H5.2 Q3.5,9 2.5,6 Z" stroke="#2a78b4" stroke-width="1.1" fill="#9cc4e4" stroke-linejoin="round" stroke-linecap="round"/><path d="M2.5,2.5 H13.5 V5 H2.5 Z" stroke="none" stroke-width="0" fill="#6aace0" /><circle cx="8" cy="11.3" r="2.6" stroke="#333" stroke-width="1" fill="#fff"/></svg>
<svg class="a" style="left:438.0px;top:124.0px" width="20" height="20" viewBox="0 0 16 16"><circle cx="5.8" cy="8" r="4.4" stroke="#2a78b4" stroke-width="1" fill="#9cc4e4"/><circle cx="10.2" cy="8" r="4.4" stroke="#2a78b4" stroke-width="1" fill="#9cc4e4"/><circle cx="5.8" cy="8" r="4.4" stroke="#2a78b4" stroke-width="1" fill="none"/></svg>
<svg class="a" style="left:461.0px;top:124.0px" width="20" height="20" viewBox="0 0 16 16"><circle cx="5.8" cy="8" r="4.4" stroke="#2a78b4" stroke-width="1" fill="#9cc4e4"/><circle cx="10.2" cy="8" r="4.4" stroke="#4a525c" stroke-width="1" fill="#f4f6f8"/><path d="M8,4.2 Q10.2,8 8,11.8" stroke="#2a78b4" stroke-width="1" fill="none" /></svg>
<svg class="a" style="left:484.0px;top:124.0px" width="20" height="20" viewBox="0 0 16 16"><circle cx="5.8" cy="8" r="4.4" stroke="#4a525c" stroke-width="1" fill="#f6f7f9"/><circle cx="10.2" cy="8" r="4.4" stroke="#4a525c" stroke-width="1" fill="none"/><path d="M8,4.2 Q10.3,8 8,11.8 Q5.7,8 8,4.2 Z" stroke="#2a78b4" stroke-width="1" fill="#9cc4e4" /></svg>
<svg class="a" style="left:512.0px;top:124.0px" width="20" height="20" viewBox="0 0 16 16"><circle cx="8" cy="8.8" r="5.6" stroke="#333" stroke-width="1" fill="none"/><path d="M8,8.8 V2.5 M8,8.8 L3,12 M8,8.8 L13,12" stroke="#333" stroke-width="1" fill="none" /><rect x="6.6" y="1.2" width="2.8" height="2.8" rx="0" stroke="#1c3c9c" stroke-width="0.5" fill="#2a5ad0"/><rect x="1.4" y="11" width="2.8" height="2.8" rx="0" stroke="#1c6c1c" stroke-width="0.5" fill="#2a9a2a"/><rect x="11.8" y="11" width="2.8" height="2.8" rx="0" stroke="#8c1414" stroke-width="0.5" fill="#d02a2a"/><rect x="7" y="7.8" width="2" height="2" rx="0" stroke="#333" stroke-width="0.6" fill="#fff"/></svg>
<svg class="a" style="left:535.0px;top:124.0px" width="20" height="20" viewBox="0 0 16 16"><ellipse cx="8" cy="8" rx="6.6" ry="5.6" stroke="#2a8a2a" stroke-width="1.3" fill="#e8f0f8"/><ellipse cx="8" cy="8" rx="3" ry="6.6" stroke="#d02a2a" stroke-width="1.3" fill="#cfe0f4"/><rect x="6.8" y="6.8" width="2.4" height="2.4" rx="0" stroke="#14287c" stroke-width="0.6" fill="#2a4ac0"/></svg>
<svg class="a" style="left:558.0px;top:124.0px" width="20" height="20" viewBox="0 0 16 16"><path d="M2,10 H9 V14.5 H2 Z M2,10 L4,8 H11 L9,10 M11,8 V12.5 L9,14.5" stroke="#2a78b4" stroke-width="1" fill="#d8e8f6" /><path d="M3,2 H7.5 V6.5 H3 Z M10.5,2.5 H14 V6" stroke="#3c3c3c" stroke-width="1" fill="#f4f4f4" /></svg>
<svg class="a" style="left:581.0px;top:124.0px" width="20" height="20" viewBox="0 0 16 16"><path d="M1.5,4 H6 V8 H1.5 Z M1.5,4 L3,2.5 H7.5 L6,4 M7.5,2.5 V6.5 L6,8" stroke="#2a78b4" stroke-width="0.9" fill="#d8e8f6" /><path d="M8.5,4 H13 V8 H8.5 Z M8.5,4 L10,2.5 H14.5 L13,4 M14.5,2.5 V6.5 L13,8" stroke="#2a78b4" stroke-width="0.9" fill="#d8e8f6" /><path d="M1.5,11 H6 V15 H1.5 Z M1.5,11 L3,9.5 H7.5 L6,11 M7.5,9.5 V13.5 L6,15" stroke="#2a78b4" stroke-width="0.9" fill="#d8e8f6" /><path d="M8.5,11 H13 V15 H8.5 Z M8.5,11 L10,9.5 H14.5 L13,11 M14.5,9.5 V13.5 L13,15" stroke="#2a78b4" stroke-width="0.9" fill="#d8e8f6" /></svg>
<div class="sep" style="left:311px;top:125px;width:1px;height:18px;"></div>
<div class="sep" style="left:432px;top:125px;width:1px;height:18px;"></div>
<div class="sep" style="left:508px;top:125px;width:1px;height:18px;"></div>
<div class="a" style="left:1229px;top:109px;width:18px;height:783px;background:linear-gradient(90deg,#f3f1ec,#fefefd 40%,#fefefd);"></div>
<div class="sbtn" style="left:1231px;top:110px;width:15px;height:16px;"></div>
<svg class="a" style="left:1233.5px;top:113px" width="10" height="10" viewBox="-5 -5 10 10"><path d="M-3.5,1.5 L0,-2 L3.5,1.5" fill="none" stroke="#4d6185" stroke-width="2" transform="rotate(0)"/></svg>
<div class="sbtn" style="left:1231px;top:127px;width:15px;height:16px;"></div>
<svg class="a" style="left:1234.5px;top:131px" width="8" height="8"><path d="M1,1.5 h6 M1,3.5 h6 M1,5.5 h6" stroke="#8ea4d8" stroke-width="1"/></svg>
<div class="sbtn" style="left:1231px;top:876px;width:15px;height:16px;"></div>
<svg class="a" style="left:1233.5px;top:879px" width="10" height="10" viewBox="-5 -5 10 10"><path d="M-3.5,1.5 L0,-2 L3.5,1.5" fill="none" stroke="#4d6185" stroke-width="2" transform="rotate(180)"/></svg>
<div class="a" style="left:59px;top:892px;width:777px;height:16px;background:#ece9d8;"></div>
<div class="a" style="left:1229px;top:892px;width:18px;height:16px;background:#ece9d8;"></div>
<div class="a" style="left:59px;top:892px;width:15px;height:15px;border:1px solid #fbfaf4;border-right-color:#cfccbc;border-bottom-color:#cfccbc;background:#ece9d8"></div>
<div class="a" style="left:74px;top:892px;width:15px;height:15px;border:1px solid #fbfaf4;border-right-color:#cfccbc;border-bottom-color:#cfccbc;background:#ece9d8"></div>
<div class="a" style="left:89px;top:892px;width:15px;height:15px;border:1px solid #fbfaf4;border-right-color:#cfccbc;border-bottom-color:#cfccbc;background:#ece9d8"></div>
<div class="a" style="left:104px;top:892px;width:15px;height:15px;border:1px solid #fbfaf4;border-right-color:#cfccbc;border-bottom-color:#cfccbc;background:#ece9d8"></div>
<svg class="a" style="left:59px;top:892px" width="60" height="15" viewBox="0 0 60 15">
<g fill="#b4b1a2" stroke="#b4b1a2" stroke-width="1"><path d="M5,3.5 v8" fill="none" stroke-width="1.4"/><path d="M11,3.5 L7,7.5 L11,11.5 Z"/>
<path d="M26,3.5 L22,7.5 L26,11.5 Z"/><path d="M35,3.5 L39,7.5 L35,11.5 Z"/>
<path d="M50,3.5 L54,7.5 L50,11.5 Z"/><path d="M56,3.5 v8" fill="none" stroke-width="1.4"/></g></svg>
<svg class="a" style="left:118px;top:892px" width="180" height="16" viewBox="0 0 180 16">
<path d="M2,0 L7,15 L57,15 L62,0 Z" fill="#000"/>
<path d="M58,15 L112,15 L117,0" fill="none" stroke="#333" stroke-width="1"/>
<path d="M113,15 L167,15 L172,0" fill="none" stroke="#333" stroke-width="1"/>
</svg>
<div class="t" style="left:132px;top:895.5px;color:#fff;font-size:11px;letter-spacing:-0.1px">Modello</div>
<div class="t" style="left:185.5px;top:895.5px;color:#000;font-size:11px;letter-spacing:-0.1px">Layout1</div>
<div class="t" style="left:240.5px;top:895.5px;color:#000;font-size:11px;letter-spacing:-0.1px">Layout2</div>
<div class="a" style="left:836px;top:892px;width:393px;height:16px;background:linear-gradient(#f3f1ec,#fefefd 40%,#fefefd);"></div>
<div class="sbtn" style="left:837px;top:893px;width:16px;height:15px;"></div>
<svg class="a" style="left:840px;top:895.5px" width="10" height="10" viewBox="-5 -5 10 10"><path d="M-3.5,1.5 L0,-2 L3.5,1.5" fill="none" stroke="#4d6185" stroke-width="2" transform="rotate(270)"/></svg>
<div class="sbtn" style="left:1124px;top:893px;width:16px;height:15px;"></div>
<svg class="a" style="left:1128px;top:896.5px" width="8" height="8"><path d="M1.5,1 v6 M3.5,1 v6 M5.5,1 v6" stroke="#8ea4d8" stroke-width="1"/></svg>
<div class="sbtn" style="left:1212px;top:893px;width:16px;height:15px;"></div>
<svg class="a" style="left:1215px;top:895.5px" width="10" height="10" viewBox="-5 -5 10 10"><path d="M-3.5,1.5 L0,-2 L3.5,1.5" fill="none" stroke="#4d6185" stroke-width="2" transform="rotate(90)"/></svg>
<div class="a" style="left:832px;top:893px;width:4px;height:14px;background:#f6f5f0;border:1px solid #c8c5b6;border-left-color:#fff;border-top-color:#fff"></div>
<div class="a" style="left:1248px;top:107px;width:32px;height:803px;background:#6a696a"></div>
<div class="tb" style="left:1252px;top:107px;width:25px;height:500px;"></div>
<div class="a" style="left:1253px;top:108px;width:23px;height:8px;background:#5e5e5e;"></div><div class="a" style="left:1257px;top:111px;width:15px;height:4px;background:conic-gradient(#2a2a2a 25%,transparent 0) 0 0/2px 2px;"></div>
<svg class="a" style="left:1255.5px;top:117.0px" width="18" height="18" viewBox="0 0 16 16"><path d="M2.5,1.5 V14 M13.5,1.5 V14 M2.5,5.5 H13.5 M4,4.3 V6.7 M12,4.3 V6.7" stroke="#3c3c3c" stroke-width="1" fill="none" /></svg>
<svg class="a" style="left:1255.5px;top:139.0px" width="18" height="18" viewBox="0 0 16 16"><path d="M2,4.5 L5.5,1.5 M10.5,14.5 L14,11.5 M3.8,3 L12.2,13" stroke="#3c3c3c" stroke-width="1" fill="none" /><path d="M3.2,5.2 L6.2,2.8 M9.8,13.2 L12.8,10.8" stroke="#3c3c3c" stroke-width="0.9" fill="none" /></svg>
<svg class="a" style="left:1255.5px;top:161.0px" width="18" height="18" viewBox="0 0 16 16"><path d="M2.5,13 Q3,4.5 12.5,2.5" stroke="#9aa4b0" stroke-width="1.6" fill="none" /><path d="M6,13.5 Q6.5,7 13.5,5.5" stroke="#3c3c3c" stroke-width="1.1" fill="none" /><path d="M6,13.5 L5,12 M6,13.5 L7.3,12.3 M13.5,5.5 L12,4.6 M13.5,5.5 L12.3,6.8" stroke="#3c3c3c" stroke-width="1" fill="none" /><rect x="1.3" y="12.3" width="2.4" height="2.4" rx="0" stroke="#000" stroke-width="1" fill="#fff"/><rect x="12.3" y="1.3" width="2.4" height="2.4" rx="0" stroke="#000" stroke-width="1" fill="#fff"/></svg>
<svg class="a" style="left:1255.5px;top:184.0px" width="18" height="18" viewBox="0 0 16 16"><path d="M6,4.5 V14 H15 M6,8 L9,11 H12 V7 M10.5,11 V14" stroke="#3c3c3c" stroke-width="1.1" fill="none" /><text x="6.5" y="4.5" font-family="Liberation Sans, sans-serif" font-size="5.5" font-weight="bold" fill="#2a6ab4">0</text><text x="12.5" y="4.5" font-family="Liberation Sans, sans-serif" font-size="5.5" font-weight="bold" fill="#2a6ab4">X</text><text x="1" y="9.5" font-family="Liberation Sans, sans-serif" font-size="5.5" font-weight="bold" fill="#2a6ab4">Y</text><text x="1" y="15" font-family="Liberation Sans, sans-serif" font-size="5.5" font-weight="bold" fill="#2a6ab4">0</text></svg>
<div class="sep" style="left:1255px;top:207px;width:19px;height:1px;"></div>
<div class="a" style="left:1254px;top:211px;width:21px;height:21px;background:#fdfdfd;border:1px solid #b9b9b9;border-radius:2px"></div>
<svg class="a" style="left:1255.5px;top:212.5px" width="18" height="18" viewBox="0 0 16 16"><circle cx="8" cy="8" r="6.3" stroke="#3c3c3c" stroke-width="1.2" fill="#f8f8f8"/><path d="M8,8 L4,4 M4,4 V6.3 M4,4 H6.3" stroke="#3c3c3c" stroke-width="1.1" fill="none" /></svg>
<svg class="a" style="left:1255.5px;top:329.0px" width="18" height="18" viewBox="0 0 16 16"><path d="M1.5,1.5 V14.5 M9.5,7 V14.5 M14.5,1.5 V7 M1.5,4.5 H14.5 M1.5,10.5 H9.5" stroke="#3c3c3c" stroke-width="1" fill="none" /></svg>
<svg class="a" style="left:1255.5px;top:350.0px" width="18" height="18" viewBox="0 0 16 16"><path d="M1.5,2 V14 M8,2 V14 M14.5,2 V14 M1.5,8 H14.5" stroke="#3c3c3c" stroke-width="1" fill="none" /><path d="M6,6.5 L8,8 L6,9.5 M10,6.5 L8,8 L10,9.5" stroke="#3c3c3c" stroke-width="1" fill="none" /></svg>
<svg class="a" style="left:1255.5px;top:372.0px" width="18" height="18" viewBox="0 0 16 16"><path d="M2,1.5 H14 M2,14.5 H14 M2,1.5 V4 M14,1.5 V4 M2,14.5 V12 M14,14.5 V12" stroke="#3c3c3c" stroke-width="1" fill="none" /><rect x="6.5" y="4.5" width="3" height="7" rx="0" stroke="#b07808" stroke-width="0.8" fill="#f8c020"/><path d="M4.5,6 V10 M11.5,6 V10" stroke="#3c3c3c" stroke-width="1" fill="none" /></svg>
<svg class="a" style="left:1255.5px;top:395.0px" width="18" height="18" viewBox="0 0 16 16"><path d="M1.5,7.5 H6 M10,7.5 H14.5 M13,5.5 V9.5 M8,2 V10" stroke="#3c3c3c" stroke-width="1" fill="none" /><path d="M5.5,14 H10.5 M8,10 V14" stroke="#3c3c3c" stroke-width="1" fill="none" /><path d="M10.5,6 L13,7.5 L10.5,9" stroke="#3c3c3c" stroke-width="1" fill="none" /></svg>
<svg class="a" style="left:1255.5px;top:422.0px" width="18" height="18" viewBox="0 0 16 16"><rect x="1.5" y="3.5" width="13" height="9" rx="0" stroke="#3c3c3c" stroke-width="1.1" fill="#fff"/><path d="M8.5,3.5 V12.5" stroke="#3c3c3c" stroke-width="1" fill="none" /><circle cx="5" cy="8" r="2" stroke="#3c3c3c" stroke-width="1" fill="none"/><path d="M5,5 V11 M2,8 H8" stroke="#3c3c3c" stroke-width="1" fill="none" /><text x="9.5" y="11.5" font-family="Liberation Sans, sans-serif" font-size="8.5" font-weight="bold" fill="#222">.1</text></svg>
<svg class="a" style="left:1255.5px;top:444.0px" width="18" height="18" viewBox="0 0 16 16"><circle cx="8" cy="8" r="6.3" stroke="#3c3c3c" stroke-width="1.1" fill="#fff"/><path d="M8,5.5 V10.5 M5.5,8 H10.5" stroke="#3c3c3c" stroke-width="1.1" fill="none" /></svg>
<svg class="a" style="left:1255.5px;top:467.0px" width="18" height="18" viewBox="0 0 16 16"><path d="M1.5,1.5 V10 M14.5,1.5 V10 M1.5,3.5 H14.5" stroke="#3c3c3c" stroke-width="1" fill="none" /><path d="M4,9 L7,12.5 L13,5.5" stroke="#2a9a2a" stroke-width="2.4" fill="none" /></svg>
<svg class="a" style="left:1255.5px;top:488.0px" width="18" height="18" viewBox="0 0 16 16"><path d="M1,7.5 H3.5 L5.5,3 L8.5,13 L11,6 L14.5,12" stroke="#3c3c3c" stroke-width="1" fill="none" /><path d="M1,7.5 L3.5,6 M1,7.5 L3.5,9" stroke="#3c3c3c" stroke-width="1" fill="none" /></svg>
<svg class="a" style="left:1255.5px;top:516.0px" width="18" height="18" viewBox="0 0 16 16"><path d="M1.5,7 V15 M14.5,7 V15 M1.5,11.5 H14.5" stroke="#3c3c3c" stroke-width="1" fill="none" /><path d="M12.5,1 L14.5,3 L8,9 L5.5,9.8 L6.3,7.3 Z" stroke="#a07020" stroke-width="0.7" fill="#f4c860" /></svg>
<svg class="a" style="left:1255.5px;top:538.0px" width="18" height="18" viewBox="0 0 16 16"><path d="M1.5,9 V15 M14.5,9 V15 M1.5,12.5 H14.5" stroke="#3c3c3c" stroke-width="1" fill="none" /><text x="8" y="9.5" font-family="Liberation Sans, sans-serif" font-size="11" text-anchor="middle" fill="#222">A</text></svg>
<svg class="a" style="left:1255.5px;top:561.0px" width="18" height="18" viewBox="0 0 16 16"><path d="M1.5,1.5 V14.5 M14.5,1.5 V14.5 M1.5,4.5 H14.5" stroke="#3c3c3c" stroke-width="1" fill="none" /><path d="M10.5,9 A2.6,2.6 0 1 0 10.5,12.5 M5.5,12.5 A2.6,2.6 0 0 0 8,13.5" stroke="#2a8a2a" stroke-width="1.4" fill="none" /><path d="M9.5,7.5 L11.5,9 L9.5,10.5" stroke="#2a8a2a" stroke-width="1" fill="none" /></svg>
<svg class="a" style="left:1255.5px;top:587.0px" width="18" height="18" viewBox="0 0 16 16"><path d="M1.5,9 V15 M14.5,9 V15 M1.5,12.5 H14.5" stroke="#3c3c3c" stroke-width="1" fill="none" /><path d="M14.5,1 L8,8" stroke="#c87820" stroke-width="2" fill="none" /><path d="M8.5,6.5 L3,10.5 L6,10.8 L10,8 Z" stroke="#5a2808" stroke-width="0.6" fill="#8a4818" /></svg>
<div class="sep" style="left:1255px;top:416px;width:19px;height:1px;"></div>
<div class="sep" style="left:1255px;top:510px;width:19px;height:1px;"></div>
<div class="sep" style="left:1255px;top:582px;width:19px;height:1px;"></div>
<div class="tb" style="left:1252px;top:609px;width:25px;height:97px;"></div>
<div class="a" style="left:1253px;top:610px;width:23px;height:6px;background:#5e5e5e;"></div><div class="a" style="left:1257px;top:611px;width:15px;height:4px;background:conic-gradient(#2a2a2a 25%,transparent 0) 0 0/2px 2px;"></div>
<svg class="a" style="left:1255.5px;top:621.0px" width="18" height="18" viewBox="0 0 16 16"><rect x="2" y="2" width="8" height="6" rx="0" stroke="#3c3c3c" stroke-width="1" fill="#fff"/><rect x="8" y="9" width="7" height="5.5" rx="0" stroke="#3c3c3c" stroke-width="1" fill="#fff"/><rect x="5" y="5.5" width="8" height="6" rx="0" stroke="#3c3c3c" stroke-width="1" fill="#a8b2be"/></svg>
<svg class="a" style="left:1255.5px;top:642.0px" width="18" height="18" viewBox="0 0 16 16"><rect x="5" y="5.5" width="8" height="6" rx="0" stroke="#3c3c3c" stroke-width="1" fill="#8a96a4"/><rect x="2" y="2" width="8" height="6" rx="0" stroke="#3c3c3c" stroke-width="1" fill="#fff"/><rect x="8" y="9" width="7" height="5.5" rx="0" stroke="#3c3c3c" stroke-width="1" fill="#fff"/></svg>
<svg class="a" style="left:1255.5px;top:664.0px" width="18" height="18" viewBox="0 0 16 16"><rect x="2" y="2" width="8" height="6" rx="0" stroke="#3c3c3c" stroke-width="1" fill="#fff"/><rect x="5" y="6" width="9" height="7" rx="0" stroke="#3c3c3c" stroke-width="1" fill="#8a96a4"/></svg>
<svg class="a" style="left:1255.5px;top:686.0px" width="18" height="18" viewBox="0 0 16 16"><rect x="2" y="3" width="10" height="8" rx="0" stroke="#3c3c3c" stroke-width="1" fill="#fff"/><rect x="7" y="8" width="7" height="6" rx="0" stroke="#3c3c3c" stroke-width="1" fill="#8a96a4"/></svg>
<div class="a" style="left:1032px;top:233px;width:243px;height:90px;background:#f5f5f5;border:1px solid #8e8e8e;border-radius:2px;"></div>
<div class="a" style="left:1033px;top:297px;width:241px;height:25px;background:#e9e9e9;border-top:1px solid #a8a8a8;"></div>
<div class="t" style="left:1037px;top:240px;font-weight:bold;font-size:11px;color:#3c3c3c">Raggio</div>
<div class="t" style="left:1037px;top:258px;font-size:11px;color:#3c3c3c;letter-spacing:-0.08px">Crea una quota radiale per un cerchio o un arco</div>
<svg class="a" style="left:1037px;top:276px" width="16" height="14"><rect x="0.5" y="0.5" width="13" height="10" fill="#f7e98a" stroke="#8a8a5a"/><rect x="0.5" y="0.5" width="13" height="2.5" fill="#3a62b8"/><rect x="3" y="8" width="13" height="6" fill="#222"/><path d="M5,10.5 h3 M5,12.5 h9" stroke="#ddd" stroke-width="1"/></svg>
<div class="t" style="left:1056px;top:277px;font-size:11px;color:#3c3c3c;letter-spacing:0.35px">DIMRAGGIO</div>
<div class="a" style="left:1038px;top:303px;width:13px;height:14px;background:#fff;border:1px solid #444;font-weight:bold;font-size:10.5px;text-align:center;line-height:12px;color:#222">?</div>
<div class="t" style="left:1056px;top:305px;font-weight:bold;font-size:11px;color:#3c3c3c;letter-spacing:-0.08px">Premere F1 per ulteriori informazioni</div>
<div class="a" style="left:0px;top:910px;width:1280px;height:4px;background:#6a6a6a"></div>
<div class="a" style="left:0px;top:914px;width:1280px;height:58px;background:#8e8e8e"></div>
<div class="a" style="left:2px;top:916px;width:10px;height:4px;background:conic-gradient(#3a3a3a 25%,transparent 0) 0 0/2px 2px;"></div>
<div class="a" style="left:15px;top:914px;width:1249px;height:57px;background:#fdfdfd;border-radius:4px 0 0 4px;"></div>
<div class="t" style="left:17px;top:916px;font-family:'Liberation Mono','DejaVu Sans Mono',monospace;font-size:13px;letter-spacing:0.2px;color:#000;">Rigenerazione modello in corso.</div>
<div class="t" style="left:17px;top:932px;font-family:'Liberation Mono','DejaVu Sans Mono',monospace;font-size:13px;letter-spacing:0.2px;color:#000;">Comando:&nbsp; &lt;Polare on&gt;</div>
<div class="a" style="left:17px;top:953px;width:1247px;height:1px;background:#a4a4a4"></div>
<div class="t" style="left:17px;top:958px;font-family:'Liberation Mono','DejaVu Sans Mono',monospace;font-size:13px;letter-spacing:0.2px;color:#000;">Comando:</div>
<div class="a" style="left:1264px;top:914px;width:16px;height:40px;background:#f6f5f0"></div>
<div class="sbtn" style="left:1264px;top:915px;width:16px;height:16px;"></div>
<svg class="a" style="left:1267px;top:918px" width="10" height="10" viewBox="-5 -5 10 10"><path d="M-3.5,1.5 L0,-2 L3.5,1.5" fill="none" stroke="#4d6185" stroke-width="2" transform="rotate(0)"/></svg>
<div class="sbtn" style="left:1264px;top:937px;width:16px;height:16px;"></div>
<svg class="a" style="left:1267px;top:940px" width="10" height="10" viewBox="-5 -5 10 10"><path d="M-3.5,1.5 L0,-2 L3.5,1.5" fill="none" stroke="#4d6185" stroke-width="2" transform="rotate(180)"/></svg>
<div class="a" style="left:1197px;top:956px;width:67px;height:15px;background:#f6f5f0"></div>
<div class="sbtn" style="left:1197px;top:956px;width:16px;height:15px;"></div>
<svg class="a" style="left:1200px;top:958.5px" width="10" height="10" viewBox="-5 -5 10 10"><path d="M-3.5,1.5 L0,-2 L3.5,1.5" fill="none" stroke="#4d6185" stroke-width="2" transform="rotate(270)"/></svg>
<div class="sbtn" style="left:1213px;top:956px;width:16px;height:15px;"></div>
<svg class="a" style="left:1217px;top:959.5px" width="8" height="8"><path d="M1.5,1 v6 M3.5,1 v6 M5.5,1 v6" stroke="#8ea4d8" stroke-width="1"/></svg>
<div class="sbtn" style="left:1245px;top:956px;width:16px;height:15px;"></div>
<svg class="a" style="left:1248px;top:958.5px" width="10" height="10" viewBox="-5 -5 10 10"><path d="M-3.5,1.5 L0,-2 L3.5,1.5" fill="none" stroke="#4d6185" stroke-width="2" transform="rotate(90)"/></svg>
<div class="a" style="left:1264px;top:954px;width:16px;height:18px;background:#fdfdfd"></div>
<div class="a" style="left:0px;top:972px;width:1280px;height:23px;background:linear-gradient(#333 0,#333 1px,#979797 1px,#8c8c8c 45%,#848484 55%,#808080 100%);"></div>
<div class="a" style="left:0px;top:973px;width:178px;height:22px;background:linear-gradient(90deg,#5a5a5a,#707070 40%,rgba(140,140,140,0) 100%);"></div>
<div class="t" style="left:12px;top:980px;font-size:11.2px;color:#0a0a0a;letter-spacing:-0.3px;transform:scaleY(1.14);transform-origin:50% 60%">-198.9712, 11.0610&nbsp; , 0.0000</div>
<div class="st" style="left:180px;width:34px"><span class="sx">SNAP</span></div>
<div class="st" style="left:214px;width:49px"><span class="sx">GRIGLIA</span></div>
<div class="st" style="left:263px;width:37px"><span class="sx">ORTO</span></div>
<div class="st on" style="left:300px;width:48px"><span class="sx">POLARE</span></div>
<div class="st on" style="left:348px;width:45px"><span class="sx">OSNAP</span></div>
<div class="st on" style="left:393px;width:89px"><span class="sx">OPUNTAMENTO</span></div>
<div class="st on" style="left:482px;width:35px"><span class="sx">UCSD</span></div>
<div class="st on" style="left:517px;width:27px"><span class="sx">DIN</span></div>
<div class="st" style="left:544px;width:25px"><span class="sx">SLN</span></div>
<div class="st" style="left:569px;width:22px"><span class="sx">PR</span></div>
<div class="st" style="left:855px;width:57px"><span class="sx">MODELLO</span></div>
<div class="st" style="left:912px;width:22px"></div>
<svg class="a" style="left:914.5px;top:975.5px" width="17" height="17" viewBox="0 0 16 16"><rect x="2.5" y="1.5" width="11" height="10" rx="0" stroke="#3c3c3c" stroke-width="1.1" fill="#f4f4f4"/><path d="M4.5,3.5 V9.5 H10.5 Z" stroke="#3c3c3c" stroke-width="1" fill="#555" /><path d="M1,13.5 H15" stroke="#3c3c3c" stroke-width="1.6" fill="none" /></svg>
<div class="st" style="left:934px;width:23px"></div>
<svg class="a" style="left:937.0px;top:975.5px" width="17" height="17" viewBox="0 0 16 16"><rect x="1.5" y="1.5" width="6" height="8" rx="0" stroke="#3c3c3c" stroke-width="1.1" fill="#f4f4f4"/><rect x="8.5" y="1.5" width="6" height="8" rx="0" stroke="#3c3c3c" stroke-width="1.1" fill="#f4f4f4"/><path d="M1,12.5 H15" stroke="#3c3c3c" stroke-width="2" fill="none" /></svg>
<div class="a" style="left:957px;top:973px;width:12px;height:22px;background:#5c5c5c"></div>
<div class="a" style="left:961px;top:976px;width:4px;height:16px;background:conic-gradient(#2a2a2a 25%,transparent 0) 0 0/2px 2px;"></div>
<div class="st" style="left:969px;width:22px"></div>
<svg class="a" style="left:971.0px;top:975.0px" width="18" height="18" viewBox="0 0 16 16"><path d="M4,8 V4.5 Q4.8,3.5 5.6,4.5 V3.2 Q6.4,2.2 7.2,3.2 V2.8 Q8,1.8 8.8,2.8 V3.6 Q9.6,2.8 10.4,3.8 V9 Q10.4,13 7.5,13.5 Q4.5,13 3,10 L1.8,8 Q2.5,7 4,8 Z" stroke="#3c3c3c" stroke-width="1" fill="#f4f4f4" /><path d="M12.5,1 V6 M10,3.5 H15" stroke="#3c3c3c" stroke-width="1.2" fill="none" /></svg>
<div class="st" style="left:991px;width:21px"></div>
<svg class="a" style="left:992.5px;top:975.0px" width="18" height="18" viewBox="0 0 16 16"><circle cx="6.5" cy="6.5" r="4.8" stroke="#3c3c3c" stroke-width="1.5" fill="#e8f0f8"/><path d="M10,10 L14.5,14.5" stroke="#3c3c3c" stroke-width="2.6" fill="none" /></svg>
<div class="st" style="left:1012px;width:21px"></div>
<svg class="a" style="left:1013.5px;top:975.0px" width="18" height="18" viewBox="0 0 16 16"><circle cx="8" cy="8" r="6.5" stroke="#3c3c3c" stroke-width="1.2" fill="#e8e8e8"/><circle cx="8" cy="8" r="3.4" stroke="#3c3c3c" stroke-width="1" fill="#fff"/><path d="M3.5,3.5 L5.6,5.6 M12.5,3.5 L10.4,5.6 M3.5,12.5 L5.6,10.4 M12.5,12.5 L10.4,10.4" stroke="#3c3c3c" stroke-width="1" fill="none" /><rect x="9" y="9" width="5" height="5" rx="0" stroke="#3c3c3c" stroke-width="1" fill="#e8e8e8"/></svg>
<div class="st" style="left:1033px;width:23px"></div>
<svg class="a" style="left:1035.5px;top:975.0px" width="18" height="18" viewBox="0 0 16 16"><rect x="2" y="1.5" width="3" height="2.6" rx="0" stroke="#3c3c3c" stroke-width="1" fill="#fff"/><rect x="6.5" y="1.5" width="3" height="2.6" rx="0" stroke="#3c3c3c" stroke-width="1" fill="#fff"/><rect x="11" y="1.5" width="3" height="2.6" rx="0" stroke="#3c3c3c" stroke-width="1" fill="#fff"/><rect x="2" y="6" width="10" height="8.5" rx="0" stroke="#3c3c3c" stroke-width="1.2" fill="#f4f4f4"/><path d="M5.5,8 L9.5,10.3 L5.5,12.6 Z" stroke="#3c3c3c" stroke-width="0.5" fill="#3c3c3c" /></svg>
<div class="a" style="left:1056px;top:973px;width:13px;height:22px;background:#5c5c5c"></div>
<div class="a" style="left:1060px;top:976px;width:4px;height:16px;background:conic-gradient(#2a2a2a 25%,transparent 0) 0 0/2px 2px;"></div>
<div class="st" style="left:1069px;width:51px"></div>
<svg class="a" style="left:1069.5px;top:973.5px" width="20" height="20" viewBox="0 0 16 16"><path d="M8,1 L9.2,8 L14.5,13 L8,10.5 L1.5,13 L6.8,8 Z" stroke="#3c3c3c" stroke-width="1" fill="#f4f4f4" /></svg>
<div class="t" style="left:1090px;top:978px;font-size:13px;color:#111;font-family:'Liberation Sans',sans-serif;letter-spacing:-0.3px">1:1</div>
<svg class="a" style="left:1106px;top:980px" width="9" height="6"><path d="M0.5,0.5 L8.5,0.5 L4.5,5.5 Z" fill="#111"/></svg>
<div class="st" style="left:1120px;width:21px"></div>
<svg class="a" style="left:1120.5px;top:973.5px" width="20" height="20" viewBox="0 0 16 16"><path d="M6,2 L7,8 L11.5,13 L6,10.5 L0.5,13 L5,8 Z" stroke="#3c3c3c" stroke-width="1" fill="#f4f4f4" /><circle cx="12" cy="11" r="2.6" stroke="#c89010" stroke-width="0.8" fill="#f8d840"/><path d="M12,6.5 V7.7 M15.5,11 H14.8 M14.6,8 L14,8.8" stroke="#c89010" stroke-width="0.9" fill="none" /></svg>
<div class="st" style="left:1141px;width:21px"></div>
<svg class="a" style="left:1141.5px;top:973.5px" width="20" height="20" viewBox="0 0 16 16"><path d="M6,2 L7,8 L11.5,13 L6,10.5 L0.5,13 L5,8 Z" stroke="#8a8a8a" stroke-width="1" fill="#d4d4d4" /><path d="M11,3 L9,8 H11.5 L10,13 L14,6.5 H11.8 L13,3 Z" stroke="#a0a0a0" stroke-width="0.6" fill="#c8c8c8" /></svg>
<div class="a" style="left:1162px;top:973px;width:9px;height:22px;background:#5c5c5c"></div>
<div class="a" style="left:1165px;top:976px;width:4px;height:16px;background:conic-gradient(#2a2a2a 25%,transparent 0) 0 0/2px 2px;"></div>
<div class="st" style="left:1171px;width:20px;"></div>
<svg class="a" style="left:1171.5px;top:974.0px" width="19" height="19" viewBox="0 0 16 16"><path d="M8,1.5 L9.2,3.2 L11.2,2.6 L11.6,4.6 L13.6,5 L13,7 L14.5,8.2 L13,9.6 L13.6,11.4 L11.6,11.8 L11.2,13.8 L9.2,13.2 L8,14.8 L6.8,13.2 L4.8,13.8 L4.4,11.8 L2.4,11.4 L3,9.6 L1.5,8.2 L3,7 L2.4,5 L4.4,4.6 L4.8,2.6 L6.8,3.2 Z" stroke="#3c3c3c" stroke-width="1" fill="#f4f4f4" /><circle cx="8" cy="8.2" r="2.6" stroke="#3c3c3c" stroke-width="1" fill="#fff"/></svg>
<div class="st" style="left:1191px;width:23px;"></div>
<svg class="a" style="left:1193.0px;top:974.0px" width="19" height="19" viewBox="0 0 16 16"><path d="M7,7.5 V5 Q7,2 10,2 Q13,2 13,5" stroke="#3c3c3c" stroke-width="1.6" fill="none" /><rect x="2.5" y="7.5" width="9" height="6.5" rx="1" stroke="#3c3c3c" stroke-width="1.1" fill="#f4f4f4"/></svg>
<div class="st" style="left:1214px;width:26px;background:linear-gradient(#8e8e8e,#7a7a7a);box-shadow:inset 1px 1px 2px #444;"></div>
<svg class="a" style="left:1217.5px;top:974.0px" width="19" height="19" viewBox="0 0 16 16"><rect x="1.5" y="2.5" width="11" height="9" rx="0" stroke="#3c3c3c" stroke-width="1.1" fill="#dcdcdc"/><path d="M1.5,2.5 H12.5" stroke="#3c3c3c" stroke-width="1" fill="none" stroke-dasharray="1 1"/><rect x="4" y="5" width="5.5" height="4.5" rx="0" stroke="#3c3c3c" stroke-width="1" fill="#f4f4f4"/><path d="M8,10.5 L10.5,13.5 L15,8.5" stroke="#2a9a2a" stroke-width="2.2" fill="none" /></svg>
<div class="st" style="left:1240px;width:17px"></div>
<svg class="a" style="left:1247px;top:982px" width="8" height="6"><path d="M0.5,0.5 L7.5,0.5 L4,5 Z" fill="#111"/></svg>
<div class="st" style="left:1257px;width:22px"></div>
<svg class="a" style="left:1258.0px;top:973.5px" width="20" height="20" viewBox="0 0 16 16"><rect x="1.5" y="2.5" width="13" height="11" rx="0" stroke="#3c3c3c" stroke-width="1.2" fill="#f8f8f8"/><rect x="1.5" y="2.5" width="13" height="3" rx="0" stroke="#3c3c3c" stroke-width="1" fill="#555"/></svg>
<div class="a" style="left:0px;top:995px;width:1280px;height:29px;background:linear-gradient(#3168d5 0,#4993e6 2px,#2663e0 5px,#245edc 60%,#2157d0 85%,#1941a5 100%);"></div>
<div class="a" style="left:0px;top:995px;width:98px;height:29px;background:linear-gradient(#388a38 0,#5cb85c 3px,#3c9a3c 7px,#359335 60%,#2c802c 90%,#236a23 100%);border-radius:0 12px 12px 0;box-shadow:inset -2px 0 4px #1e5a1e, 2px 0 3px #1a3f9a;"></div>
<svg class="a" style="left:9px;top:999px" width="22" height="20" viewBox="0 0 22 20">
<path d="M2.5,3.5 Q5.5,1.5 9.5,3.5 L8.3,9 Q4.8,7.3 1.3,9 Z" fill="#e8542c"/>
<path d="M10.8,4 Q14.5,6 18.8,4 L17.5,9.6 Q13.5,11.5 9.6,9.5 Z" fill="#74c044"/>
<path d="M1,10.3 Q4.5,8.5 8,10.3 L6.8,15.8 Q3.3,14 -0.2,15.8 Z" fill="#4a8ae8"/>
<path d="M9.3,10.8 Q13,12.8 17.2,10.9 L16,16.5 Q12,18.4 8.1,16.4 Z" fill="#f4c82c"/>
</svg>
<div class="t" style="left:35px;top:1000px;color:#fff;font-size:17.5px;font-weight:bold;font-style:italic;text-shadow:1px 1px 1px #1a4a1a;letter-spacing:0px;font-family:'Liberation Sans',sans-serif">start</div>
<svg class="a" style="left:107.0px;top:1000.0px" width="18" height="18" viewBox="0 0 16 16"><rect x="1.5" y="2.5" width="12" height="11" rx="1.5" stroke="#3a6ab8" stroke-width="1" fill="#dceaf8"/><text x="7.5" y="12" font-family="Liberation Serif, serif" font-size="11" font-weight="bold" font-style="italic" text-anchor="middle" fill="#1c62c8">e</text><path d="M1.5,9 Q8,0 14.5,5" stroke="#f0a818" stroke-width="1.4" fill="none" /></svg>
<svg class="a" style="left:131.0px;top:1000.0px" width="18" height="18" viewBox="0 0 16 16"><circle cx="8" cy="8" r="6.5" stroke="#b84808" stroke-width="0.6" fill="#f07818"/><circle cx="7.5" cy="7" r="4" stroke="none" stroke-width="0" fill="#3858c0"/><path d="M2,6 Q3.5,1.5 9,2 Q6,3 6.5,5.5 Q9.5,5 10.5,8 Q10.5,11.5 7,11.5 Q3.5,11 3.5,8 Q2.5,10 3.5,12.5 Q1,10 2,6 Z" stroke="none" stroke-width="0" fill="#f8a020" /><path d="M9,2 Q14.5,3 14.5,8.5 Q14,14 8,14.5 Q12,13 12,9 Q12,5 9,2" stroke="none" stroke-width="0" fill="#e85810" /></svg>
<svg class="a" style="left:154.0px;top:1000.0px" width="18" height="18" viewBox="0 0 16 16"><path d="M1,13.5 Q8,9.5 15,13.5 V15 H1 Z" stroke="none" stroke-width="0" fill="#3a78d8" /><circle cx="5.5" cy="5.5" r="2.4" stroke="#1c7a2c" stroke-width="0.6" fill="#4cb848"/><path d="M2,13 Q2,8.5 5.5,8.5 Q9,8.5 9,13 Z" stroke="#1c7a2c" stroke-width="0.6" fill="#4cb848" /><circle cx="11" cy="5" r="2.2" stroke="#2a5ab8" stroke-width="0.6" fill="#6a9ae8"/><path d="M8,12 Q8,8 11,8 Q14,8 14,12 Z" stroke="#2a5ab8" stroke-width="0.6" fill="#6a9ae8" /><path d="M1,11 Q8,7 15,10.5" stroke="#f8c020" stroke-width="1.4" fill="none" /></svg>
<div class="task" style="left:183px;width:156px;padding-left:28px">Come faccio a salvar…</div>
<svg class="a" style="left:191.0px;top:1001.5px" width="16" height="16" viewBox="0 0 16 16"><circle cx="8" cy="8" r="6.5" stroke="#b84808" stroke-width="0.6" fill="#f07818"/><circle cx="7.5" cy="7" r="4" stroke="none" stroke-width="0" fill="#3858c0"/><path d="M2,6 Q3.5,1.5 9,2 Q6,3 6.5,5.5 Q9.5,5 10.5,8 Q10.5,11.5 7,11.5 Q3.5,11 3.5,8 Q2.5,10 3.5,12.5 Q1,10 2,6 Z" stroke="none" stroke-width="0" fill="#f8a020" /><path d="M9,2 Q14.5,3 14.5,8.5 Q14,14 8,14.5 Q12,13 12,9 Q12,5 9,2" stroke="none" stroke-width="0" fill="#e85810" /></svg>
<div class="task act" style="left:342px;width:159px;padding-left:28px">AutoCAD 2009 - [Dis…</div>
<svg class="a" style="left:350.0px;top:1001.5px" width="16" height="16" viewBox="0 0 16 16"><path d="M6.5,1.5 H9 L15,12.5 L11.5,14 L10.3,11.5 L6.8,12.3 L6.5,14.5 H2 Z M7.4,9.6 L9.4,9.1 L8,5.8 Z" stroke="#7a0808" stroke-width="0.5" fill="#d81c1c" fill-rule="evenodd"/><path d="M6.5,1.5 L2,14.5 L4.2,14.5 Z" stroke="none" stroke-width="0" fill="#f05a5a" /></svg>
<div class="task" style="left:503px;width:157px;padding-left:28px">CINEMA 4D - [Senza …</div>
<svg class="a" style="left:511.0px;top:1001.5px" width="16" height="16" viewBox="0 0 16 16"><circle cx="8" cy="8" r="6.8" stroke="#0c1c5a" stroke-width="0.8" fill="#2a48b0"/><circle cx="6.5" cy="6" r="2.8" stroke="none" stroke-width="0" fill="#c4d4f8"/><path d="M3.5,11 Q8,14 12.5,10.5" stroke="#8aa4e8" stroke-width="1.4" fill="none" /></svg>
<div class="task" style="left:662px;width:158px;padding-left:28px">ScreenPrint</div>
<svg class="a" style="left:670.0px;top:1001.5px" width="16" height="16" viewBox="0 0 16 16"><path d="M1.5,13.5 V3 H6 L7.5,4.5 H13.5 V6.5" stroke="#a07808" stroke-width="0.8" fill="#f8d868" /><path d="M1.5,13.5 L3.5,6.5 H15 L13,13.5 Z" stroke="#a07808" stroke-width="0.8" fill="#fce890" /></svg>
<div class="a" style="left:1115px;top:995px;width:165px;height:29px;background:linear-gradient(#1a8ee0 0,#35b4f6 2px,#18a0ee 5px,#139ae8 60%,#0f8fdc 85%,#0c72b8 100%);border-left:1px solid #0e4a9a;box-shadow:inset 1px 0 1px #4cc0f8"></div>
<svg class="a" style="left:1105px;top:1000px" width="20" height="20"><circle cx="10" cy="10" r="8.5" fill="#3c8af0" stroke="#bcd8fa" stroke-width="1"/><path d="M11.5,6 L7.5,10 L11.5,14" fill="none" stroke="#fff" stroke-width="2"/></svg>
<svg class="a" style="left:1126.0px;top:1001.5px" width="16" height="16" viewBox="0 0 16 16"><rect x="1.5" y="5" width="13" height="8.5" rx="1.5" stroke="#222" stroke-width="1" fill="#555"/><rect x="5" y="3" width="5" height="2.5" rx="0" stroke="#222" stroke-width="0.8" fill="#888"/><circle cx="8" cy="9.3" r="2.8" stroke="#111" stroke-width="1" fill="#d8d8d8"/><rect x="11.5" y="6" width="2" height="1.5" rx="0" stroke="none" stroke-width="0" fill="#eee"/></svg>
<svg class="a" style="left:1144.0px;top:1001.5px" width="16" height="16" viewBox="0 0 16 16"><rect x="0.5" y="0.5" width="15" height="15" rx="2" stroke="#c85808" stroke-width="0.8" fill="#f08018"/><path d="M5,11.5 Q8,13 11,11.5 M4.5,13.5 Q8,15 11.5,13.5" stroke="#fff" stroke-width="1.2" fill="none" /><path d="M8.5,2.5 Q6,5 8.5,7 Q10,8.5 8,10 M10.5,4.5 Q9,6 10.3,7.4" stroke="#fff" stroke-width="1.2" fill="none" /></svg>
<svg class="a" style="left:1160.0px;top:1001.5px" width="16" height="16" viewBox="0 0 16 16"><path d="M6,1 L13,3 Q13.5,10 8,15 Q4,11 3.5,5 Z" stroke="#8a8a8a" stroke-width="0.8" fill="#e8e8e8" /><circle cx="4.5" cy="4.5" r="3.8" stroke="#8a0808" stroke-width="0.6" fill="#e02020"/><path d="M3,3 L6,6 M6,3 L3,6" stroke="#fff" stroke-width="1.4" fill="none" /></svg>
<svg class="a" style="left:1179.5px;top:1001.5px" width="16" height="16" viewBox="0 0 16 16"><rect x="5.5" y="1.5" width="8" height="6.5" rx="0" stroke="#1c2c6a" stroke-width="1" fill="#4a78d8"/><rect x="1.5" y="6.5" width="8" height="6.5" rx="0" stroke="#1c2c6a" stroke-width="1" fill="#6a98f0"/><path d="M3.5,14.5 H8 M9,9.5 H13" stroke="#c8d4f0" stroke-width="1.4" fill="none" /></svg>
<svg class="a" style="left:1197.0px;top:1001.5px" width="16" height="16" viewBox="0 0 16 16"><rect x="3.5" y="5.5" width="9" height="8.5" rx="0" stroke="#5a5a5a" stroke-width="0.8" fill="#e8e8e8"/><rect x="5" y="7" width="6" height="4" rx="0" stroke="none" stroke-width="0" fill="#4a8ae8"/><path d="M2,3 Q5,0.5 8,3" stroke="#6ab0f0" stroke-width="1.4" fill="none" /><path d="M4.5,15 H11.5" stroke="#777" stroke-width="1.4" fill="none" /><circle cx="11.5" cy="5" r="2" stroke="#2a5ab8" stroke-width="0.6" fill="#8ab8f8"/></svg>
<svg class="a" style="left:1216.0px;top:1001.5px" width="16" height="16" viewBox="0 0 16 16"><rect x="0.5" y="0.5" width="15" height="15" rx="2" stroke="#8a0808" stroke-width="0.8" fill="#e01818"/><path d="M2.5,10 Q3,3 9,3 Q13.5,4 13.5,9.5 M9,3 Q6.5,7 6.5,11 Q7,13.5 9,12.5" stroke="#fff" stroke-width="1.6" fill="none" stroke-linecap="round"/></svg>
<div class="t" style="left:1242px;top:1003px;color:#fff;font-size:11px;">1.03</div>
</body></html>
